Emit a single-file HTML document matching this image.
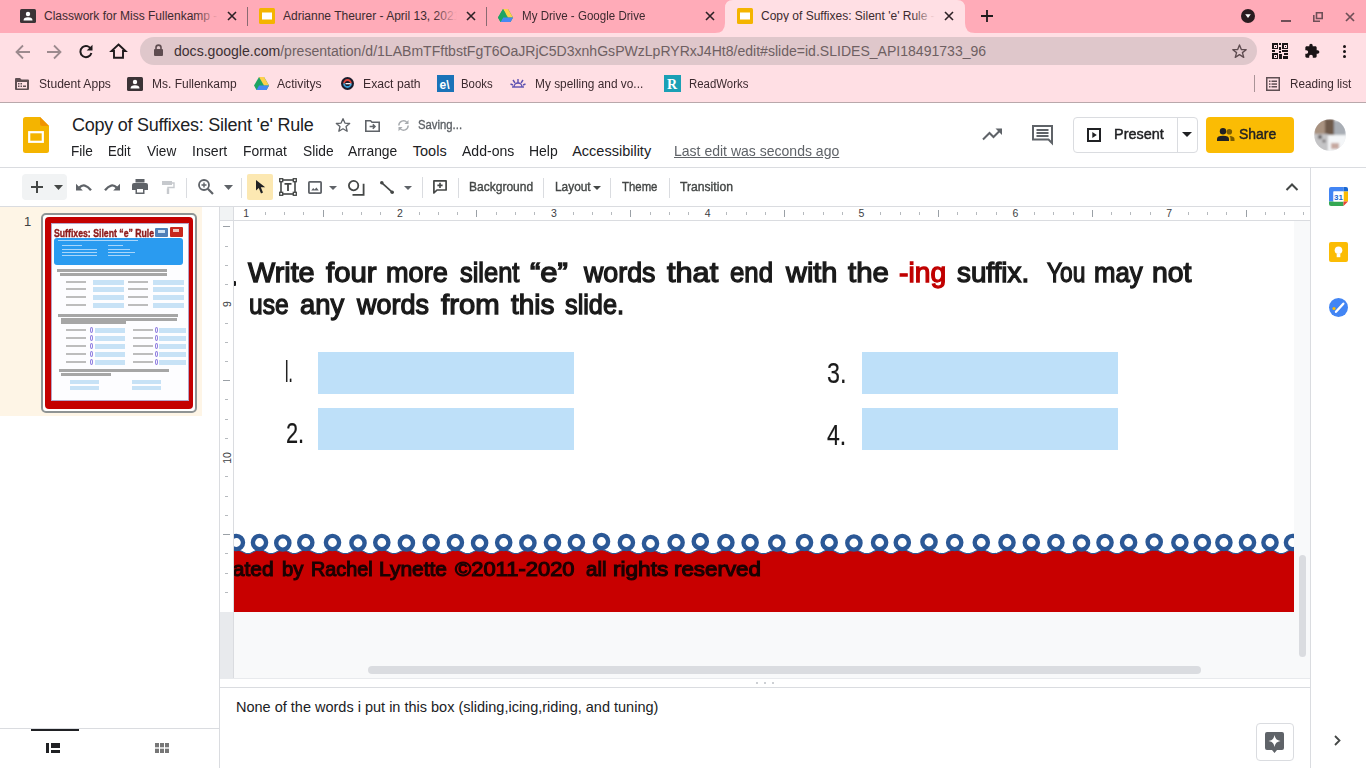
<!DOCTYPE html>
<html><head><meta charset="utf-8">
<style>
*{margin:0;padding:0;box-sizing:border-box}
html,body{width:1366px;height:768px;overflow:hidden;background:#fff;font-family:"Liberation Sans",sans-serif;position:relative}
.a{position:absolute}
.t{position:absolute;white-space:nowrap;line-height:1}
svg{position:absolute;overflow:visible}
</style></head><body>
<!-- ===== TAB STRIP ===== -->
<div class="a" style="left:0;top:0;width:1366px;height:33px;background:#ffabb8"></div>
<!-- active tab with feet -->
<svg style="left:715px;top:0" width="264" height="34" viewBox="0 0 264 34">
<path d="M0 33 Q10 33 10 23 L10 8 Q10 0 18 0 L242 0 Q250 0 250 8 L250 23 Q250 33 260 33 Z" fill="#ffdfe4"/>
</svg>
<!-- tab 1 -->
<svg style="left:20px;top:9px" width="16" height="14" viewBox="0 0 16 14"><rect x="0" y="0" width="16" height="14" rx="1.5" fill="#3b3336"/><circle cx="8" cy="5" r="2.2" fill="#fff"/><path d="M3.5 11.5 Q3.5 8.3 8 8.3 Q12.5 8.3 12.5 11.5 Z" fill="#fff"/></svg>
<div class="t" style="left:44px;top:10px;font-size:12px;color:#3c2a2f;width:177px;overflow:hidden">Classwork for Miss Fullenkamp - Google Classroom</div>
<div class="a" style="left:195px;top:5px;width:27px;height:22px;background:linear-gradient(90deg,rgba(255,171,184,0),#ffabb8 85%)"></div>
<svg style="left:227px;top:11px" width="10" height="10" viewBox="0 0 10 10"><path d="M1 1L9 9M9 1L1 9" stroke="#2d2226" stroke-width="1.6"/></svg>
<div class="a" style="left:247px;top:7px;width:1px;height:19px;background:#8a6a72"></div>
<!-- tab 2 -->
<svg style="left:259px;top:8px" width="16" height="16" viewBox="0 0 16 16"><rect x="0" y="0" width="16" height="16" rx="1.5" fill="#f4b400"/><rect x="3" y="4.5" width="10" height="7" fill="#fff"/></svg>
<div class="t" style="left:283px;top:10px;font-size:12px;color:#3c2a2f;width:177px;overflow:hidden">Adrianne Theurer - April 13, 2021</div>
<div class="a" style="left:434px;top:5px;width:27px;height:22px;background:linear-gradient(90deg,rgba(255,171,184,0),#ffabb8 85%)"></div>
<svg style="left:466px;top:11px" width="10" height="10" viewBox="0 0 10 10"><path d="M1 1L9 9M9 1L1 9" stroke="#2d2226" stroke-width="1.6"/></svg>
<div class="a" style="left:486px;top:7px;width:1px;height:19px;background:#8a6a72"></div>
<!-- tab 3 -->
<svg style="left:498px;top:9px" width="15" height="13" viewBox="0 0 15 13"><path d="M5 0 L10 0 L15 8.5 L12.5 13 L2.5 13 L0 8.5 Z" fill="#1fa463"/><path d="M5 0 L10 0 L15 8.5 L10 8.5 Z" fill="#ffd04b"/><path d="M15 8.5 L12.5 13 L2.5 13 L5 8.5 Z" fill="#4688f4"/><path d="M5 0 L7.5 4.3 L2.5 13 L0 8.5 Z" fill="#1fa463"/></svg>
<div class="t" style="left:522.3px;top:10.2px;font-size:12.5px;font-weight:normal;color:#3c2a2f;transform:scaleX(0.925);transform-origin:0 0;">My Drive - Google Drive</div>
<svg style="left:705px;top:11px" width="10" height="10" viewBox="0 0 10 10"><path d="M1 1L9 9M9 1L1 9" stroke="#2d2226" stroke-width="1.6"/></svg>
<!-- tab 4 active -->
<svg style="left:737px;top:8px" width="16" height="16" viewBox="0 0 16 16"><rect x="0" y="0" width="16" height="16" rx="1.5" fill="#f4b400"/><rect x="3" y="4.5" width="10" height="7" fill="#fff"/></svg>
<div class="t" style="left:761px;top:10px;font-size:12px;color:#3c2a2f;width:177px;overflow:hidden">Copy of Suffixes: Silent 'e' Rule - Google Slides</div>
<div class="a" style="left:912px;top:5px;width:27px;height:22px;background:linear-gradient(90deg,rgba(255,223,228,0),#ffdfe4 85%)"></div>
<svg style="left:944px;top:11px" width="10" height="10" viewBox="0 0 10 10"><path d="M1 1L9 9M9 1L1 9" stroke="#2d2226" stroke-width="1.6"/></svg>
<!-- new tab + -->
<svg style="left:981px;top:10px" width="12" height="12" viewBox="0 0 12 12"><path d="M6 0V12M0 6H12" stroke="#1f1a1c" stroke-width="1.8"/></svg>
<!-- right controls -->
<svg style="left:1241px;top:9px" width="14" height="14" viewBox="0 0 14 14"><circle cx="7" cy="7" r="7" fill="#2a1c20"/><path d="M4.2 5.2 H9.8 L7 9 Z" fill="#fff"/></svg>
<div class="a" style="left:1281px;top:20px;width:10px;height:2px;background:#6e4f57"></div>
<svg style="left:1313px;top:12px" width="10" height="10" viewBox="0 0 10 10"><path d="M3.5 0.8 H9.2 V6.5 H3.5 Z" fill="none" stroke="#6e4f57" stroke-width="1.6"/><path d="M0.8 3 V9.2 H7" fill="none" stroke="#6e4f57" stroke-width="1.6"/></svg>
<svg style="left:1345px;top:12px" width="10" height="10" viewBox="0 0 10 10"><path d="M1 1L9 9M9 1L1 9" stroke="#6e4f57" stroke-width="1.7"/></svg>

<!-- ===== TOOLBAR ===== -->
<div class="a" style="left:0;top:33px;width:1366px;height:69px;background:#ffdfe4"></div>
<div class="a" style="left:0;top:102px;width:1366px;height:1px;background:#b9a8ab"></div>
<!-- nav -->
<svg style="left:15px;top:44px" width="16" height="16" viewBox="0 0 16 16"><path d="M15 8H2M8 1.5L1.5 8L8 14.5" fill="none" stroke="#9c8a8e" stroke-width="1.8"/></svg>
<svg style="left:46px;top:44px" width="16" height="16" viewBox="0 0 16 16"><path d="M1 8H14M8 1.5L14.5 8L8 14.5" fill="none" stroke="#9c8a8e" stroke-width="1.8"/></svg>
<svg style="left:78px;top:43px" width="16" height="16" viewBox="0 0 16 16"><path d="M13.2 6.5 A5.6 5.6 0 1 0 13.4 10" fill="none" stroke="#1f1a1c" stroke-width="2"/><path d="M14.5 1.8 V7.6 H8.7 Z" fill="#1f1a1c"/></svg>
<svg style="left:110px;top:43px" width="17" height="16" viewBox="0 0 17 16"><path d="M8.5 1.5 L15.5 8 H13 V14.8 H4 V8 H1.5 Z" fill="none" stroke="#1f1a1c" stroke-width="1.9" stroke-linejoin="miter"/></svg>
<!-- omnibox -->
<div class="a" style="left:140px;top:37px;width:1117px;height:28px;background:#dfc7cb;border-radius:14px"></div>
<svg style="left:154px;top:44px" width="9" height="12" viewBox="0 0 9 12"><path d="M2 5.5V3.6A2.5 2.5 0 0 1 7 3.6V5.5" fill="none" stroke="#5e4c50" stroke-width="1.6"/><rect x="0" y="5" width="9" height="7" rx="1" fill="#5e4c50"/></svg>
<div class="t" style="left:174px;top:44px;font-size:14.05px;color:#3c3033">docs.google.com<span style="color:#6e5f62">/presentation/d/1LABmTFftbstFgT6OaJRjC5D3xnhGsPWzLpRYRxJ4Ht8/edit#slide=id.SLIDES_API18491733_96</span></div>
<svg style="left:1232px;top:44px" width="15" height="14" viewBox="0 0 24 23"><path d="M12 1.5 L15 9 L23 9.3 L16.8 14.2 L19 22 L12 17.5 L5 22 L7.2 14.2 L1 9.3 L9 9 Z" fill="none" stroke="#5e4c50" stroke-width="2.2" stroke-linejoin="round"/></svg>
<!-- QR -->
<svg style="left:1272px;top:43px" width="16" height="16" viewBox="0 0 16 16" shape-rendering="crispEdges">
<rect x="0" y="0" width="6" height="6" fill="#1a1416"/><rect x="1.5" y="1.5" width="3" height="3" fill="#ffdfe4"/><rect x="2.5" y="2.5" width="1" height="1" fill="#1a1416"/>
<rect x="10" y="0" width="6" height="6" fill="#1a1416"/><rect x="11.5" y="1.5" width="3" height="3" fill="#ffdfe4"/><rect x="12.5" y="2.5" width="1" height="1" fill="#1a1416"/>
<rect x="0" y="10" width="6" height="6" fill="#1a1416"/><rect x="1.5" y="11.5" width="3" height="3" fill="#ffdfe4"/><rect x="2.5" y="12.5" width="1" height="1" fill="#1a1416"/>
<rect x="7" y="0" width="2" height="2" fill="#1a1416"/><rect x="7" y="4" width="2" height="3" fill="#1a1416"/><rect x="0" y="7" width="3" height="2" fill="#1a1416"/><rect x="7" y="8" width="2" height="2" fill="#1a1416"/><rect x="10" y="7" width="6" height="2" fill="#1a1416"/><rect x="7" y="11" width="3" height="5" fill="#1a1416"/><rect x="12" y="10" width="4" height="2" fill="#1a1416"/><rect x="11" y="13" width="5" height="3" fill="#1a1416"/>
</svg>
<!-- puzzle -->
<svg style="left:1304px;top:43px" width="16" height="16" viewBox="0 0 24 24"><path d="M20.5 11H19V7c0-1.1-.9-2-2-2h-4V3.5C13 2.12 11.88 1 10.5 1S8 2.12 8 3.5V5H4c-1.1 0-1.99.9-1.99 2v3.8H3.5c1.49 0 2.7 1.21 2.7 2.7s-1.21 2.7-2.7 2.7H2V20c0 1.1.9 2 2 2h3.8v-1.5c0-1.49 1.21-2.7 2.7-2.7 1.49 0 2.7 1.21 2.7 2.7V22H17c1.1 0 2-.9 2-2v-4h1.5c1.38 0 2.5-1.12 2.5-2.5S21.88 11 20.5 11z" fill="#1a1416"/></svg>
<!-- kebab -->
<div class="a" style="left:1342.5px;top:45px;width:3.4px;height:3.4px;border-radius:50%;background:#1a1416"></div>
<div class="a" style="left:1342.5px;top:50px;width:3.4px;height:3.4px;border-radius:50%;background:#1a1416"></div>
<div class="a" style="left:1342.5px;top:55px;width:3.4px;height:3.4px;border-radius:50%;background:#1a1416"></div>

<!-- ===== BOOKMARKS ===== -->
<svg style="left:15px;top:78px" width="14" height="12" viewBox="0 0 14 12"><path d="M0 1 Q0 0 1 0 H5 L6.5 1.5 H13 Q14 1.5 14 2.5 V11 Q14 12 13 12 H1 Q0 12 0 11 Z" fill="#5f4f53"/><rect x="2" y="4" width="10" height="6.5" fill="#ffdfe4"/><g fill="#5f4f53"><rect x="3" y="5" width="1.5" height="1.5"/><rect x="5.5" y="5" width="1.5" height="1.5"/><rect x="3" y="7.5" width="1.5" height="1.5"/><rect x="5.5" y="7.5" width="1.5" height="1.5"/><rect x="8" y="7.5" width="3" height="1.5"/></g></svg>
<div class="t" style="left:38.5px;top:78.0px;font-size:12.5px;font-weight:normal;color:#3c2a2f;transform:scaleX(0.967);transform-origin:0 0;">Student Apps</div>
<svg style="left:127px;top:77px" width="16" height="14" viewBox="0 0 16 14"><rect x="0" y="0" width="16" height="14" rx="1.5" fill="#3b3336"/><circle cx="8" cy="5" r="2.2" fill="#fff"/><path d="M3.5 11.5 Q3.5 8.3 8 8.3 Q12.5 8.3 12.5 11.5 Z" fill="#fff"/></svg>
<div class="t" style="left:151.6px;top:78.0px;font-size:12.5px;font-weight:normal;color:#3c2a2f;transform:scaleX(0.959);transform-origin:0 0;">Ms. Fullenkamp</div>
<svg style="left:254px;top:77px" width="15" height="13" viewBox="0 0 15 13"><path d="M5 0 L10 0 L15 8.5 L12.5 13 L2.5 13 L0 8.5 Z" fill="#1fa463"/><path d="M5 0 L10 0 L15 8.5 L10 8.5 Z" fill="#ffd04b"/><path d="M15 8.5 L12.5 13 L2.5 13 L5 8.5 Z" fill="#4688f4"/></svg>
<div class="t" style="left:277.0px;top:78.0px;font-size:12.5px;font-weight:normal;color:#3c2a2f;transform:scaleX(0.974);transform-origin:0 0;">Activitys</div>
<svg style="left:341px;top:77px" width="13" height="13" viewBox="0 0 13 13"><circle cx="6.5" cy="6.5" r="6.5" fill="#1b1b2b"/><path d="M3 6.5 A3.5 3.5 0 0 1 10 6.5" fill="none" stroke="#e2483d" stroke-width="1.8"/><path d="M10 6.5 A3.5 3.5 0 0 1 3 6.5" fill="none" stroke="#3aa0d8" stroke-width="1.8"/><rect x="4.5" y="6" width="5" height="1.3" fill="#f5f5f5"/></svg>
<div class="t" style="left:363.0px;top:78.0px;font-size:12.5px;font-weight:normal;color:#3c2a2f;transform:scaleX(0.976);transform-origin:0 0;">Exact path</div>
<svg style="left:437px;top:75px" width="17" height="17" viewBox="0 0 17 17"><rect width="17" height="17" fill="#1a73b8"/><text x="2.5" y="13.5" font-size="12" font-weight="bold" fill="#fff" font-family="Liberation Sans">e\</text></svg>
<div class="t" style="left:461.0px;top:78.0px;font-size:12.5px;font-weight:normal;color:#3c2a2f;transform:scaleX(0.911);transform-origin:0 0;">Books</div>
<svg style="left:510px;top:77px" width="16" height="12" viewBox="0 0 16 12"><g stroke="#5b4fb0" stroke-width="1.4"><path d="M2 10 H14"/><path d="M8 2 V6"/><path d="M3 3 L5 6"/><path d="M13 3 L11 6"/><path d="M0.5 7 L3 8"/><path d="M15.5 7 L13 8"/></g><path d="M4 10 A4 4 0 0 1 12 10" fill="none" stroke="#5b4fb0" stroke-width="1.4"/></svg>
<div class="t" style="left:534.5px;top:78.0px;font-size:12.5px;font-weight:normal;color:#3c2a2f;transform:scaleX(0.950);transform-origin:0 0;">My spelling and vo...</div>
<svg style="left:664px;top:75px" width="17" height="17" viewBox="0 0 17 17"><rect width="17" height="17" fill="#1aa0b5"/><text x="3" y="14" font-size="14" font-weight="bold" fill="#fff" font-family="Liberation Serif">R</text></svg>
<div class="t" style="left:688.8px;top:78.0px;font-size:12.5px;font-weight:normal;color:#3c2a2f;transform:scaleX(0.912);transform-origin:0 0;">ReadWorks</div>
<div class="a" style="left:1254px;top:75px;width:1px;height:17px;background:#a99397"></div>
<svg style="left:1266px;top:77px" width="14" height="14" viewBox="0 0 14 14"><rect x="0.75" y="0.75" width="12.5" height="12.5" fill="none" stroke="#5f4f53" stroke-width="1.5"/><g fill="#5f4f53"><rect x="3" y="3.5" width="1.5" height="1.5"/><rect x="5.5" y="3.5" width="5.5" height="1.5"/><rect x="3" y="6.3" width="1.5" height="1.5"/><rect x="5.5" y="6.3" width="5.5" height="1.5"/><rect x="3" y="9" width="1.5" height="1.5"/><rect x="5.5" y="9" width="5.5" height="1.5"/></g></svg>
<div class="t" style="left:1289.5px;top:78.0px;font-size:12.5px;font-weight:normal;color:#3c2a2f;transform:scaleX(0.938);transform-origin:0 0;">Reading list</div>

<!-- ===== DOCS HEADER ===== -->
<svg style="left:23px;top:117px" width="26" height="36" viewBox="0 0 26 36"><path d="M2.5 0 H17 L26 9 V33.5 Q26 36 23.5 36 H2.5 Q0 36 0 33.5 V2.5 Q0 0 2.5 0 Z" fill="#f4b400"/><path d="M17 0 L26 9 H19 Q17 9 17 7 Z" fill="#f09300"/><rect x="6.2" y="15.2" width="13.6" height="9.6" fill="none" stroke="#fff" stroke-width="2.2"/></svg>
<div class="t" style="left:72px;top:116px;font-size:18px;color:#202124;letter-spacing:-0.25px">Copy of Suffixes: Silent 'e' Rule</div>
<svg style="left:335px;top:117px" width="16" height="16" viewBox="0 0 24 24"><path d="M12 2.5 L14.9 9.1 L22 9.7 L16.6 14.4 L18.2 21.4 L12 17.7 L5.8 21.4 L7.4 14.4 L2 9.7 L9.1 9.1 Z" fill="none" stroke="#5f6368" stroke-width="2" stroke-linejoin="round"/></svg>
<svg style="left:365px;top:119.5px" width="15" height="12" viewBox="0 0 15 12"><path d="M0.8 0.8 H5.6 L7 2.2 H14.2 V11.2 H0.8 Z" fill="none" stroke="#5f6368" stroke-width="1.6"/><path d="M4.6 6.6 H9.8 M7.8 4.4 L10 6.6 L7.8 8.8" fill="none" stroke="#5f6368" stroke-width="1.5"/></svg>
<svg style="left:396px;top:118px" width="15" height="15" viewBox="0 0 24 24"><path d="M4.5 12 A7.5 7.5 0 0 1 17.5 7" fill="none" stroke="#a8acb0" stroke-width="2.3"/><path d="M19.5 12 A7.5 7.5 0 0 1 6.5 17" fill="none" stroke="#a8acb0" stroke-width="2.3"/><path d="M20 3 V9.5 H13.5 Z" fill="#a8acb0"/><path d="M4 21 V14.5 H10.5 Z" fill="#a8acb0"/></svg>
<div class="t" style="left:418.0px;top:117.9px;font-size:13px;font-weight:normal;color:#5f6368;transform:scaleX(0.871);transform-origin:0 0;-webkit-text-stroke:0.35px currentColor;">Saving...</div>
<!-- menu -->
<div class="t" style="left:71.4px;top:144.2px;font-size:14.5px;font-weight:normal;color:#202124;transform:scaleX(0.939);transform-origin:0 0;">File</div>
<div class="t" style="left:108.0px;top:144.2px;font-size:14.5px;font-weight:normal;color:#202124;transform:scaleX(0.904);transform-origin:0 0;">Edit</div>
<div class="t" style="left:146.5px;top:144.2px;font-size:14.5px;font-weight:normal;color:#202124;transform:scaleX(0.938);transform-origin:0 0;">View</div>
<div class="t" style="left:191.5px;top:144.2px;font-size:14.5px;font-weight:normal;color:#202124;transform:scaleX(0.973);transform-origin:0 0;">Insert</div>
<div class="t" style="left:242.5px;top:144.2px;font-size:14.5px;font-weight:normal;color:#202124;transform:scaleX(0.957);transform-origin:0 0;">Format</div>
<div class="t" style="left:302.6px;top:144.2px;font-size:14.5px;font-weight:normal;color:#202124;transform:scaleX(0.950);transform-origin:0 0;">Slide</div>
<div class="t" style="left:348.0px;top:144.2px;font-size:14.5px;font-weight:normal;color:#202124;transform:scaleX(0.954);transform-origin:0 0;">Arrange</div>
<div class="t" style="left:412.8px;top:144.2px;font-size:14.5px;font-weight:normal;color:#202124;transform:scaleX(1.000);transform-origin:0 0;">Tools</div>
<div class="t" style="left:461.5px;top:144.2px;font-size:14.5px;font-weight:normal;color:#202124;transform:scaleX(0.969);transform-origin:0 0;">Add-ons</div>
<div class="t" style="left:528.6px;top:144.2px;font-size:14.5px;font-weight:normal;color:#202124;transform:scaleX(0.963);transform-origin:0 0;">Help</div>
<div class="t" style="left:572.2px;top:144.2px;font-size:14.5px;font-weight:normal;color:#202124;transform:scaleX(1.000);transform-origin:0 0;">Accessibility</div>
<div class="t" style="left:674.3px;top:144.2px;font-size:14.5px;font-weight:normal;color:#5f6368;transform:scaleX(0.967);transform-origin:0 0;text-decoration:underline;">Last edit was seconds ago</div>
<!-- right -->
<svg style="left:982px;top:128px" width="21" height="13" viewBox="0 0 21 13"><path d="M1 11.5 L7.5 5 L11.5 9 L19 1.5" fill="none" stroke="#5f6368" stroke-width="2"/><path d="M13.5 0.5 H20 V7 Z" fill="#5f6368"/></svg>
<svg style="left:1032px;top:125px" width="21" height="19" viewBox="0 0 21 19"><path d="M1 1 H20 V18 L16.5 14.5 H1 Z" fill="none" stroke="#5f6368" stroke-width="2" stroke-linejoin="miter"/><path d="M4.5 5 H16.5 M4.5 8 H16.5 M4.5 11 H16.5" stroke="#5f6368" stroke-width="1.8"/></svg>
<div class="a" style="left:1073px;top:117px;width:125px;height:36px;border:1px solid #dadce0;border-radius:4px;background:#fff"></div>
<div class="a" style="left:1177px;top:118px;width:1px;height:34px;background:#dadce0"></div>
<svg style="left:1087px;top:128px" width="14" height="14" viewBox="0 0 14 14"><rect x="1" y="1" width="12" height="12" fill="none" stroke="#202124" stroke-width="2"/><path d="M5.3 4 L9.8 7 L5.3 10 Z" fill="#202124"/></svg>
<div class="t" style="left:1113.6px;top:125.8px;font-size:15.5px;font-weight:normal;color:#202124;transform:scaleX(0.933);transform-origin:0 0;-webkit-text-stroke:0.45px currentColor;">Present</div>
<svg style="left:1182px;top:132px" width="10" height="5" viewBox="0 0 10 5"><path d="M0 0 H10 L5 5 Z" fill="#202124"/></svg>
<div class="a" style="left:1206px;top:117px;width:88px;height:36px;border-radius:4px;background:#fbbc04"></div>
<svg style="left:1217px;top:128px" width="18" height="13" viewBox="0 0 18 13"><circle cx="6" cy="3.3" r="3.2" fill="#202124"/><path d="M0 13 V11 Q0 7.7 6 7.7 Q12 7.7 12 11 V13 Z" fill="#202124"/><circle cx="12.3" cy="3.8" r="2.8" fill="#7a5b00"/><path d="M12.5 8 Q17.5 8.3 17.5 11 V13 H13.5 V11 Q13.5 9.2 12.5 8 Z" fill="#7a5b00"/></svg>
<div class="t" style="left:1238.7px;top:125.8px;font-size:15.5px;font-weight:normal;color:#202124;transform:scaleX(0.900);transform-origin:0 0;-webkit-text-stroke:0.45px currentColor;">Share</div>
<!-- avatar -->
<svg style="left:1314px;top:119px" width="32" height="32" viewBox="0 0 32 32">
<defs><clipPath id="avc"><circle cx="16" cy="16" r="15.8"/></clipPath><filter id="avb" x="-20%" y="-20%" width="140%" height="140%"><feGaussianBlur stdDeviation="1.1"/></filter></defs>
<g clip-path="url(#avc)">
<rect width="32" height="32" fill="#e9ebee"/>
<g filter="url(#avb)">
<rect x="0" y="0" width="12" height="15" fill="#a89280"/>
<rect x="11" y="0" width="9" height="16" fill="#6e5a4c"/>
<rect x="20" y="2" width="12" height="14" fill="#a9aeb5"/>
<rect x="0" y="15" width="14" height="17" fill="#c4c4c6"/>
<circle cx="6" cy="18" r="2" fill="#5a5456"/>
<circle cx="10" cy="22" r="1.6" fill="#6a6466"/>
<rect x="14" y="16" width="18" height="16" fill="#f4f6f8"/>
<rect x="17" y="24" width="8" height="6" fill="#c7a9a0"/>
</g></g></svg>
<div class="a" style="left:0;top:167px;width:1366px;height:1px;background:#dadce0"></div>

<!-- ===== SLIDES TOOLBAR ===== -->
<div class="a" style="left:0;top:206px;width:1310px;height:1px;background:#dadce0"></div>
<div class="a" style="left:22px;top:174px;width:45px;height:26px;background:#f1f3f4;border-radius:4px"></div>
<svg style="left:31px;top:181px" width="12" height="12" viewBox="0 0 12 12"><path d="M6 0V12M0 6H12" stroke="#444746" stroke-width="2"/></svg>
<svg style="left:54px;top:185px" width="9" height="5" viewBox="0 0 9 5"><path d="M0 0H9L4.5 5Z" fill="#444746"/></svg>
<!-- undo -->
<svg style="left:76px;top:183px" width="16" height="8" viewBox="0 0 16 8"><path d="M3.2 4.6 Q8.5 -0.8 15 7.2" fill="none" stroke="#5f6368" stroke-width="2.3"/><path d="M0 0.8 V7.6 H6.8 Z" fill="#5f6368"/></svg>
<!-- redo -->
<svg style="left:104px;top:183px" width="16" height="8" viewBox="0 0 16 8"><path d="M12.8 4.6 Q7.5 -0.8 1 7.2" fill="none" stroke="#5f6368" stroke-width="2.3"/><path d="M16 0.8 V7.6 H9.2 Z" fill="#5f6368"/></svg>
<!-- print -->
<svg style="left:132px;top:179px" width="16" height="15" viewBox="0 0 16 15"><rect x="3.5" y="0" width="9" height="3.5" fill="#5f6368"/><path d="M0 6 Q0 4 2 4 H14 Q16 4 16 6 V11 H12.5 V15 H3.5 V11 H0 Z" fill="#5f6368"/><rect x="5" y="10" width="6" height="3.5" fill="#fff"/></svg>
<!-- paint format -->
<svg style="left:162px;top:181px" width="13" height="13" viewBox="0 0 13 13"><rect x="0" y="0" width="10" height="4" fill="#c6c9cd"/><path d="M10 2 H12 V6.5 H6 V8" fill="none" stroke="#c6c9cd" stroke-width="1.4"/><rect x="4.8" y="7.5" width="2.4" height="5.5" fill="#c6c9cd"/></svg>
<div class="a" style="left:186px;top:178px;width:1px;height:20px;background:#dadce0"></div>
<!-- zoom -->
<svg style="left:198px;top:179px" width="16" height="16" viewBox="0 0 16 16"><circle cx="6" cy="6" r="5" fill="none" stroke="#5f6368" stroke-width="1.8"/><path d="M9.8 9.8 L15 15" stroke="#5f6368" stroke-width="2.2"/><path d="M6 3.5V8.5M3.5 6H8.5" stroke="#5f6368" stroke-width="1.4"/></svg>
<svg style="left:224px;top:185px" width="9" height="5" viewBox="0 0 9 5"><path d="M0 0H9L4.5 5Z" fill="#5f6368"/></svg>
<div class="a" style="left:241px;top:178px;width:1px;height:20px;background:#dadce0"></div>
<!-- select -->
<div class="a" style="left:247px;top:174px;width:26px;height:26px;background:#fce8b2;border-radius:2px"></div>
<svg style="left:256px;top:180px" width="10" height="14" viewBox="0 0 10 14"><path d="M0 0 L0 10.5 L2.8 8 L5 13.5 L7 12.6 L4.8 7.3 L9.2 7.3 Z" fill="#202124"/></svg>
<!-- textbox -->
<svg style="left:279px;top:178px" width="18" height="18" viewBox="0 0 18 18"><rect x="2" y="2" width="14" height="14" fill="none" stroke="#444746" stroke-width="1.6"/><g fill="#fff" stroke="#444746" stroke-width="1.3"><rect x="0.7" y="0.7" width="3" height="3"/><rect x="14.3" y="0.7" width="3" height="3"/><rect x="0.7" y="14.3" width="3" height="3"/><rect x="14.3" y="14.3" width="3" height="3"/></g><path d="M5.5 5.8 H12.5 M9 5.8 V13" stroke="#444746" stroke-width="1.8"/></svg>
<!-- image -->
<svg style="left:308px;top:180.5px" width="14" height="13" viewBox="0 0 14 13"><rect x="0.9" y="0.9" width="12.2" height="11.2" rx="0.8" fill="none" stroke="#5f6368" stroke-width="1.8"/><path d="M3.2 9.6 L5.2 7 L6.6 8.6 L8.4 6.4 L10.8 9.6 Z" fill="#5f6368"/></svg>
<svg style="left:329px;top:186px" width="8" height="4" viewBox="0 0 8 4"><path d="M0 0H8L4 4Z" fill="#5f6368"/></svg>
<!-- shape -->
<svg style="left:347.5px;top:179.5px" width="17" height="16" viewBox="0 0 17 16"><circle cx="5.6" cy="5.6" r="4.7" fill="none" stroke="#444746" stroke-width="1.8"/><path d="M4.5 14.9 H15.6 V3.8" fill="none" stroke="#444746" stroke-width="1.8"/></svg>
<!-- line -->
<svg style="left:379.5px;top:180.5px" width="14" height="13" viewBox="0 0 14 13"><path d="M1.6 1.6 L12.4 11.4" stroke="#444746" stroke-width="1.7"/><circle cx="1.8" cy="1.8" r="1.8" fill="#444746"/><circle cx="12.2" cy="11.2" r="1.8" fill="#444746"/></svg>
<svg style="left:404px;top:186px" width="8" height="4" viewBox="0 0 8 4"><path d="M0 0H8L4 4Z" fill="#5f6368"/></svg>
<div class="a" style="left:422px;top:177px;width:1px;height:21px;background:#dadce0"></div>
<!-- add comment -->
<svg style="left:433px;top:180px" width="14" height="14" viewBox="0 0 14 14"><path d="M0.9 0.9 H13.1 V10 H4 L0.9 13 Z" fill="none" stroke="#444746" stroke-width="1.7" stroke-linejoin="round"/><path d="M7 2.8 V8 M4.4 5.4 H9.6" stroke="#444746" stroke-width="1.6"/></svg>
<div class="a" style="left:458px;top:178px;width:1px;height:20px;background:#dadce0"></div>
<div class="t" style="left:469.0px;top:180.4px;font-size:13.5px;font-weight:normal;color:#444746;transform:scaleX(0.890);transform-origin:0 0;-webkit-text-stroke:0.4px currentColor;">Background</div>
<div class="a" style="left:543px;top:178px;width:1px;height:20px;background:#dadce0"></div>
<div class="t" style="left:555.3px;top:180.4px;font-size:13.5px;font-weight:normal;color:#444746;transform:scaleX(0.880);transform-origin:0 0;-webkit-text-stroke:0.4px currentColor;">Layout</div>
<svg style="left:593px;top:186px" width="8" height="4" viewBox="0 0 8 4"><path d="M0 0H8L4 4Z" fill="#444746"/></svg>
<div class="a" style="left:610px;top:178px;width:1px;height:20px;background:#dadce0"></div>
<div class="t" style="left:621.7px;top:180.4px;font-size:13.5px;font-weight:normal;color:#444746;transform:scaleX(0.844);transform-origin:0 0;-webkit-text-stroke:0.4px currentColor;">Theme</div>
<div class="a" style="left:669px;top:178px;width:1px;height:20px;background:#dadce0"></div>
<div class="t" style="left:680.0px;top:180.4px;font-size:13.5px;font-weight:normal;color:#444746;transform:scaleX(0.900);transform-origin:0 0;-webkit-text-stroke:0.4px currentColor;">Transition</div>
<svg style="left:1285px;top:182px" width="14" height="9" viewBox="0 0 14 9"><path d="M1.5 8 L7 2.5 L12.5 8" fill="none" stroke="#444746" stroke-width="2"/></svg>

<!-- ===== FILMSTRIP ===== -->
<div class="a" style="left:0;top:207px;width:202px;height:209px;background:#fef5e6"></div>
<div class="a" style="left:219px;top:207px;width:1px;height:561px;background:#dadce0"></div>
<div class="t" style="left:24px;top:215px;font-size:13px;color:#3c4043">1</div>
<div class="a" style="left:41px;top:213px;width:156px;height:200px;border:2px solid #8f9494;border-radius:5px;background:#fff"></div>
<div class="a" style="left:45px;top:217px;width:148px;height:192px;background:#c40000;border-radius:4px"></div>
<div class="a" style="left:51px;top:223px;width:138px;height:178px;background:#fdfdff;box-shadow:0 0 0 1px #b6a4c8 inset"></div>
<div class="t" style="left:53.6px;top:228.1px;font-size:10.5px;font-weight:bold;color:#8e1b1b;transform:scaleX(0.829);transform-origin:0 0;-webkit-text-stroke:0.4px currentColor;">Suffixes: Silent “e” Rule</div>
<div class="a" style="left:155px;top:228px;width:13px;height:9px;background:#4f7fb8;border-radius:1px"></div>
<div class="a" style="left:158px;top:230px;width:7px;height:3px;background:#cfe3f5"></div>
<div class="a" style="left:170px;top:227px;width:13px;height:10px;background:#c8261e;border-radius:1px"></div>
<div class="a" style="left:173px;top:229px;width:6px;height:3px;background:#f3c6c0"></div>
<div class="a" style="left:54px;top:238px;width:129px;height:27px;background:#2a9bf0;border-radius:3px"></div>
<div class="a" style="left:58px;top:240px;width:80px;height:1.4px;background:#a9d6fb"></div>
<div class="a" style="left:62px;top:245px;width:20px;height:1.4px;background:#a9d6fb"></div>
<div class="a" style="left:108px;top:245px;width:15px;height:1.4px;background:#a9d6fb"></div>
<div class="a" style="left:62px;top:249px;width:35px;height:1.4px;background:#a9d6fb"></div>
<div class="a" style="left:108px;top:249px;width:22px;height:1.4px;background:#a9d6fb"></div>
<div class="a" style="left:62px;top:252px;width:35px;height:1.4px;background:#a9d6fb"></div>
<div class="a" style="left:108px;top:252px;width:27px;height:1.4px;background:#a9d6fb"></div>
<div class="a" style="left:62px;top:255px;width:35px;height:1.4px;background:#a9d6fb"></div>
<div class="a" style="left:108px;top:255px;width:22px;height:1.4px;background:#a9d6fb"></div>
<div class="a" style="left:57px;top:269.4px;width:110px;height:2.4px;background:#a6a6a6"></div>
<div class="a" style="left:60px;top:273.4px;width:107px;height:2.4px;background:#a6a6a6"></div>
<div class="a" style="left:66px;top:281.4px;width:20px;height:2px;background:#bdbdbd"></div>
<div class="a" style="left:93px;top:280px;width:31px;height:5px;background:#c7e2f6"></div>
<div class="a" style="left:128px;top:281.4px;width:20px;height:2px;background:#bdbdbd"></div>
<div class="a" style="left:153px;top:280px;width:31px;height:5px;background:#c7e2f6"></div>
<div class="a" style="left:66px;top:288.4px;width:20px;height:2px;background:#bdbdbd"></div>
<div class="a" style="left:93px;top:287px;width:31px;height:5px;background:#c7e2f6"></div>
<div class="a" style="left:128px;top:288.4px;width:20px;height:2px;background:#bdbdbd"></div>
<div class="a" style="left:153px;top:287px;width:31px;height:5px;background:#c7e2f6"></div>
<div class="a" style="left:66px;top:296.4px;width:20px;height:2px;background:#bdbdbd"></div>
<div class="a" style="left:93px;top:295px;width:31px;height:5px;background:#c7e2f6"></div>
<div class="a" style="left:128px;top:296.4px;width:20px;height:2px;background:#bdbdbd"></div>
<div class="a" style="left:153px;top:295px;width:31px;height:5px;background:#c7e2f6"></div>
<div class="a" style="left:66px;top:304.4px;width:20px;height:2px;background:#bdbdbd"></div>
<div class="a" style="left:93px;top:303px;width:31px;height:5px;background:#c7e2f6"></div>
<div class="a" style="left:128px;top:304.4px;width:20px;height:2px;background:#bdbdbd"></div>
<div class="a" style="left:153px;top:303px;width:31px;height:5px;background:#c7e2f6"></div>
<div class="a" style="left:58px;top:314.4px;width:120px;height:2.4px;background:#a6a6a6"></div>
<div class="a" style="left:61px;top:318.4px;width:116px;height:2.4px;background:#a6a6a6"></div>
<div class="a" style="left:61px;top:321.4px;width:65px;height:2.4px;background:#a6a6a6"></div>
<div class="a" style="left:66px;top:329.4px;width:20px;height:2px;background:#bdbdbd"></div>
<div class="a" style="left:90px;top:327px;width:3px;height:6px;border:1px solid #8f7ee0;border-radius:50%"></div>
<div class="a" style="left:95px;top:328px;width:30px;height:5px;background:#c7e2f6"></div>
<div class="a" style="left:133px;top:329.4px;width:20px;height:2px;background:#bdbdbd"></div>
<div class="a" style="left:155px;top:327px;width:3px;height:6px;border:1px solid #8f7ee0;border-radius:50%"></div>
<div class="a" style="left:159px;top:328px;width:27px;height:5px;background:#c7e2f6"></div>
<div class="a" style="left:66px;top:337.4px;width:20px;height:2px;background:#bdbdbd"></div>
<div class="a" style="left:90px;top:335px;width:3px;height:6px;border:1px solid #8f7ee0;border-radius:50%"></div>
<div class="a" style="left:95px;top:336px;width:30px;height:5px;background:#c7e2f6"></div>
<div class="a" style="left:133px;top:337.4px;width:20px;height:2px;background:#bdbdbd"></div>
<div class="a" style="left:155px;top:335px;width:3px;height:6px;border:1px solid #8f7ee0;border-radius:50%"></div>
<div class="a" style="left:159px;top:336px;width:27px;height:5px;background:#c7e2f6"></div>
<div class="a" style="left:66px;top:345.4px;width:20px;height:2px;background:#bdbdbd"></div>
<div class="a" style="left:90px;top:343px;width:3px;height:6px;border:1px solid #8f7ee0;border-radius:50%"></div>
<div class="a" style="left:95px;top:344px;width:30px;height:5px;background:#c7e2f6"></div>
<div class="a" style="left:133px;top:345.4px;width:20px;height:2px;background:#bdbdbd"></div>
<div class="a" style="left:155px;top:343px;width:3px;height:6px;border:1px solid #8f7ee0;border-radius:50%"></div>
<div class="a" style="left:159px;top:344px;width:27px;height:5px;background:#c7e2f6"></div>
<div class="a" style="left:66px;top:353.4px;width:20px;height:2px;background:#bdbdbd"></div>
<div class="a" style="left:90px;top:351px;width:3px;height:6px;border:1px solid #8f7ee0;border-radius:50%"></div>
<div class="a" style="left:95px;top:352px;width:30px;height:5px;background:#c7e2f6"></div>
<div class="a" style="left:133px;top:353.4px;width:20px;height:2px;background:#bdbdbd"></div>
<div class="a" style="left:155px;top:351px;width:3px;height:6px;border:1px solid #8f7ee0;border-radius:50%"></div>
<div class="a" style="left:159px;top:352px;width:27px;height:5px;background:#c7e2f6"></div>
<div class="a" style="left:66px;top:361.4px;width:20px;height:2px;background:#bdbdbd"></div>
<div class="a" style="left:90px;top:359px;width:3px;height:6px;border:1px solid #8f7ee0;border-radius:50%"></div>
<div class="a" style="left:95px;top:360px;width:30px;height:5px;background:#c7e2f6"></div>
<div class="a" style="left:133px;top:361.4px;width:20px;height:2px;background:#bdbdbd"></div>
<div class="a" style="left:155px;top:359px;width:3px;height:6px;border:1px solid #8f7ee0;border-radius:50%"></div>
<div class="a" style="left:159px;top:360px;width:27px;height:5px;background:#c7e2f6"></div>
<div class="a" style="left:59px;top:369.4px;width:110px;height:2.4px;background:#a6a6a6"></div>
<div class="a" style="left:61px;top:373.4px;width:50px;height:2.4px;background:#a6a6a6"></div>
<div class="a" style="left:70px;top:380px;width:29px;height:4px;background:#c7e2f6"></div>
<div class="a" style="left:132px;top:380px;width:29px;height:4px;background:#c7e2f6"></div>
<div class="a" style="left:70px;top:386px;width:29px;height:4px;background:#c7e2f6"></div>
<div class="a" style="left:132px;top:386px;width:29px;height:4px;background:#c7e2f6"></div>
<div class="a" style="left:0;top:728px;width:219px;height:1px;background:#dadce0"></div>
<div class="a" style="left:31px;top:729px;width:48px;height:2px;background:#202124"></div>
<svg style="left:46px;top:743px" width="14" height="10" viewBox="0 0 14 10"><rect x="0" y="0" width="3" height="10" fill="#202124"/><rect x="5" y="0" width="9" height="5" fill="#202124"/><rect x="5" y="7" width="9" height="3" fill="#202124"/></svg>
<svg style="left:155px;top:743px" width="14" height="10" viewBox="0 0 14 10" fill="#777"><rect x="0" y="0" width="4" height="4.3"/><rect x="5" y="0" width="4" height="4.3"/><rect x="10" y="0" width="4" height="4.3"/><rect x="0" y="5.7" width="4" height="4.3"/><rect x="5" y="5.7" width="4" height="4.3"/><rect x="10" y="5.7" width="4" height="4.3"/></svg>
<!-- ===== CANVAS ===== -->
<div class="a" style="left:220px;top:207px;width:1090px;height:472px;background:#f8f9fa"></div>
<div class="a" style="left:220px;top:207px;width:1090px;height:13px;background:#fff"></div>
<div class="a" style="left:220px;top:207px;width:13px;height:13px;background:#f1f3f4"></div>
<div class="a" style="left:220px;top:220px;width:1090px;height:1px;background:#dadce0"></div>
<div class="a" style="left:220px;top:221px;width:13px;height:391px;background:#fff"></div>
<div class="a" style="left:220px;top:612px;width:13px;height:67px;background:#e8eaed"></div>
<div class="a" style="left:233px;top:207px;width:1px;height:472px;background:#dadce0"></div>
<div class="t" style="left:243.2px;top:207.5px;font-size:10.5px;color:#3c4043;width:6px;text-align:center">1</div>
<div class="a" style="left:264.9px;top:212px;width:1px;height:3px;background:#b6babe"></div>
<div class="a" style="left:284.2px;top:212px;width:1px;height:3px;background:#b6babe"></div>
<div class="a" style="left:303.4px;top:212px;width:1px;height:3px;background:#b6babe"></div>
<div class="a" style="left:322.6px;top:210px;width:1px;height:7px;background:#9aa0a6"></div>
<div class="a" style="left:341.8px;top:212px;width:1px;height:3px;background:#b6babe"></div>
<div class="a" style="left:361.1px;top:212px;width:1px;height:3px;background:#b6babe"></div>
<div class="a" style="left:380.3px;top:212px;width:1px;height:3px;background:#b6babe"></div>
<div class="t" style="left:397.0px;top:207.5px;font-size:10.5px;color:#3c4043;width:6px;text-align:center">2</div>
<div class="a" style="left:418.8px;top:212px;width:1px;height:3px;background:#b6babe"></div>
<div class="a" style="left:438.0px;top:212px;width:1px;height:3px;background:#b6babe"></div>
<div class="a" style="left:457.2px;top:212px;width:1px;height:3px;background:#b6babe"></div>
<div class="a" style="left:476.4px;top:210px;width:1px;height:7px;background:#9aa0a6"></div>
<div class="a" style="left:495.7px;top:212px;width:1px;height:3px;background:#b6babe"></div>
<div class="a" style="left:514.9px;top:212px;width:1px;height:3px;background:#b6babe"></div>
<div class="a" style="left:534.1px;top:212px;width:1px;height:3px;background:#b6babe"></div>
<div class="t" style="left:550.9px;top:207.5px;font-size:10.5px;color:#3c4043;width:6px;text-align:center">3</div>
<div class="a" style="left:572.6px;top:212px;width:1px;height:3px;background:#b6babe"></div>
<div class="a" style="left:591.8px;top:212px;width:1px;height:3px;background:#b6babe"></div>
<div class="a" style="left:611.0px;top:212px;width:1px;height:3px;background:#b6babe"></div>
<div class="a" style="left:630.3px;top:210px;width:1px;height:7px;background:#9aa0a6"></div>
<div class="a" style="left:649.5px;top:212px;width:1px;height:3px;background:#b6babe"></div>
<div class="a" style="left:668.7px;top:212px;width:1px;height:3px;background:#b6babe"></div>
<div class="a" style="left:688.0px;top:212px;width:1px;height:3px;background:#b6babe"></div>
<div class="t" style="left:704.7px;top:207.5px;font-size:10.5px;color:#3c4043;width:6px;text-align:center">4</div>
<div class="a" style="left:726.4px;top:212px;width:1px;height:3px;background:#b6babe"></div>
<div class="a" style="left:745.6px;top:212px;width:1px;height:3px;background:#b6babe"></div>
<div class="a" style="left:764.9px;top:212px;width:1px;height:3px;background:#b6babe"></div>
<div class="a" style="left:784.1px;top:210px;width:1px;height:7px;background:#9aa0a6"></div>
<div class="a" style="left:803.3px;top:212px;width:1px;height:3px;background:#b6babe"></div>
<div class="a" style="left:822.6px;top:212px;width:1px;height:3px;background:#b6babe"></div>
<div class="a" style="left:841.8px;top:212px;width:1px;height:3px;background:#b6babe"></div>
<div class="t" style="left:858.5px;top:207.5px;font-size:10.5px;color:#3c4043;width:6px;text-align:center">5</div>
<div class="a" style="left:880.2px;top:212px;width:1px;height:3px;background:#b6babe"></div>
<div class="a" style="left:899.5px;top:212px;width:1px;height:3px;background:#b6babe"></div>
<div class="a" style="left:918.7px;top:212px;width:1px;height:3px;background:#b6babe"></div>
<div class="a" style="left:937.9px;top:210px;width:1px;height:7px;background:#9aa0a6"></div>
<div class="a" style="left:957.2px;top:212px;width:1px;height:3px;background:#b6babe"></div>
<div class="a" style="left:976.4px;top:212px;width:1px;height:3px;background:#b6babe"></div>
<div class="a" style="left:995.6px;top:212px;width:1px;height:3px;background:#b6babe"></div>
<div class="t" style="left:1012.4px;top:207.5px;font-size:10.5px;color:#3c4043;width:6px;text-align:center">6</div>
<div class="a" style="left:1034.1px;top:212px;width:1px;height:3px;background:#b6babe"></div>
<div class="a" style="left:1053.3px;top:212px;width:1px;height:3px;background:#b6babe"></div>
<div class="a" style="left:1072.5px;top:212px;width:1px;height:3px;background:#b6babe"></div>
<div class="a" style="left:1091.8px;top:210px;width:1px;height:7px;background:#9aa0a6"></div>
<div class="a" style="left:1111.0px;top:212px;width:1px;height:3px;background:#b6babe"></div>
<div class="a" style="left:1130.2px;top:212px;width:1px;height:3px;background:#b6babe"></div>
<div class="a" style="left:1149.5px;top:212px;width:1px;height:3px;background:#b6babe"></div>
<div class="t" style="left:1166.2px;top:207.5px;font-size:10.5px;color:#3c4043;width:6px;text-align:center">7</div>
<div class="a" style="left:1187.9px;top:212px;width:1px;height:3px;background:#b6babe"></div>
<div class="a" style="left:1207.1px;top:212px;width:1px;height:3px;background:#b6babe"></div>
<div class="a" style="left:1226.4px;top:212px;width:1px;height:3px;background:#b6babe"></div>
<div class="a" style="left:1245.6px;top:210px;width:1px;height:7px;background:#9aa0a6"></div>
<div class="a" style="left:1264.8px;top:212px;width:1px;height:3px;background:#b6babe"></div>
<div class="a" style="left:1284.1px;top:212px;width:1px;height:3px;background:#b6babe"></div>
<div class="a" style="left:1303.3px;top:212px;width:1px;height:3px;background:#b6babe"></div>
<div class="a" style="left:223px;top:226.3px;width:7px;height:1px;background:#9aa0a6"></div>
<div class="a" style="left:225px;top:245.6px;width:3px;height:1px;background:#b6babe"></div>
<div class="a" style="left:225px;top:264.8px;width:3px;height:1px;background:#b6babe"></div>
<div class="a" style="left:225px;top:284.0px;width:3px;height:1px;background:#b6babe"></div>
<div class="t" style="left:216.5px;top:298.8px;width:20px;height:10px;font-size:10.5px;color:#3c4043;text-align:center;transform:rotate(-90deg);line-height:10px">9</div>
<div class="a" style="left:225px;top:322.5px;width:3px;height:1px;background:#b6babe"></div>
<div class="a" style="left:225px;top:341.7px;width:3px;height:1px;background:#b6babe"></div>
<div class="a" style="left:225px;top:360.9px;width:3px;height:1px;background:#b6babe"></div>
<div class="a" style="left:223px;top:380.2px;width:7px;height:1px;background:#9aa0a6"></div>
<div class="a" style="left:225px;top:399.4px;width:3px;height:1px;background:#b6babe"></div>
<div class="a" style="left:225px;top:418.6px;width:3px;height:1px;background:#b6babe"></div>
<div class="a" style="left:225px;top:437.9px;width:3px;height:1px;background:#b6babe"></div>
<div class="t" style="left:216.5px;top:452.6px;width:20px;height:10px;font-size:10.5px;color:#3c4043;text-align:center;transform:rotate(-90deg);line-height:10px">10</div>
<div class="a" style="left:225px;top:476.3px;width:3px;height:1px;background:#b6babe"></div>
<div class="a" style="left:225px;top:495.5px;width:3px;height:1px;background:#b6babe"></div>
<div class="a" style="left:225px;top:514.8px;width:3px;height:1px;background:#b6babe"></div>
<div class="a" style="left:223px;top:534.0px;width:7px;height:1px;background:#9aa0a6"></div>
<div class="a" style="left:225px;top:553.2px;width:3px;height:1px;background:#b6babe"></div>
<div class="a" style="left:225px;top:572.5px;width:3px;height:1px;background:#b6babe"></div>
<div class="a" style="left:225px;top:591.7px;width:3px;height:1px;background:#b6babe"></div>
<div class="a" style="left:234px;top:221px;width:1060px;height:391px;background:#fff;overflow:hidden">
<div class="t" style="left:14.2px;top:38.1px;font-size:28px;font-weight:normal;color:#1a1a1a;transform:scaleX(1.028);transform-origin:0 0;-webkit-text-stroke:1.3px currentColor;">Write</div>
<div class="t" style="left:91.5px;top:38.1px;font-size:28px;font-weight:normal;color:#1a1a1a;transform:scaleX(1.048);transform-origin:0 0;-webkit-text-stroke:1.3px currentColor;">four</div>
<div class="t" style="left:152.4px;top:38.1px;font-size:28px;font-weight:normal;color:#1a1a1a;transform:scaleX(0.969);transform-origin:0 0;-webkit-text-stroke:1.3px currentColor;">more</div>
<div class="t" style="left:226.0px;top:38.1px;font-size:28px;font-weight:normal;color:#1a1a1a;transform:scaleX(0.908);transform-origin:0 0;-webkit-text-stroke:1.3px currentColor;">silent</div>
<div class="t" style="left:296.4px;top:38.1px;font-size:28px;font-weight:normal;color:#1a1a1a;transform:scaleX(1.109);transform-origin:0 0;-webkit-text-stroke:1.3px currentColor;">“e”</div>
<div class="t" style="left:350.3px;top:38.1px;font-size:28px;font-weight:normal;color:#1a1a1a;transform:scaleX(0.957);transform-origin:0 0;-webkit-text-stroke:1.3px currentColor;">words</div>
<div class="t" style="left:432.5px;top:38.1px;font-size:28px;font-weight:normal;color:#1a1a1a;transform:scaleX(1.096);transform-origin:0 0;-webkit-text-stroke:1.3px currentColor;">that</div>
<div class="t" style="left:495.7px;top:38.1px;font-size:28px;font-weight:normal;color:#1a1a1a;transform:scaleX(0.921);transform-origin:0 0;-webkit-text-stroke:1.3px currentColor;">end</div>
<div class="t" style="left:551.7px;top:38.1px;font-size:28px;font-weight:normal;color:#1a1a1a;transform:scaleX(1.033);transform-origin:0 0;-webkit-text-stroke:1.3px currentColor;">with</div>
<div class="t" style="left:613.9px;top:38.1px;font-size:28px;font-weight:normal;color:#1a1a1a;transform:scaleX(1.049);transform-origin:0 0;-webkit-text-stroke:1.3px currentColor;">the</div>
<div class="t" style="left:665.3px;top:38.1px;font-size:28px;font-weight:normal;color:#c00000;transform:scaleX(1.009);transform-origin:0 0;-webkit-text-stroke:1.3px currentColor;">-ing</div>
<div class="t" style="left:723.3px;top:38.1px;font-size:28px;font-weight:normal;color:#1a1a1a;transform:scaleX(0.993);transform-origin:0 0;-webkit-text-stroke:1.3px currentColor;">suffix.</div>
<div class="t" style="left:812.9px;top:38.1px;font-size:28px;font-weight:normal;color:#1a1a1a;transform:scaleX(0.813);transform-origin:0 0;-webkit-text-stroke:1.3px currentColor;">You</div>
<div class="t" style="left:860.3px;top:38.1px;font-size:28px;font-weight:normal;color:#1a1a1a;transform:scaleX(0.921);transform-origin:0 0;-webkit-text-stroke:1.3px currentColor;">may</div>
<div class="t" style="left:918.3px;top:38.1px;font-size:28px;font-weight:normal;color:#1a1a1a;transform:scaleX(1.015);transform-origin:0 0;-webkit-text-stroke:1.3px currentColor;">not</div>
<div class="t" style="left:14.8px;top:69.7px;font-size:28px;font-weight:normal;color:#1a1a1a;transform:scaleX(0.878);transform-origin:0 0;-webkit-text-stroke:1.3px currentColor;">use</div>
<div class="t" style="left:66.0px;top:69.7px;font-size:28px;font-weight:normal;color:#1a1a1a;transform:scaleX(0.978);transform-origin:0 0;-webkit-text-stroke:1.3px currentColor;">any</div>
<div class="t" style="left:122.7px;top:69.7px;font-size:28px;font-weight:normal;color:#1a1a1a;transform:scaleX(0.963);transform-origin:0 0;-webkit-text-stroke:1.3px currentColor;">words</div>
<div class="t" style="left:206.6px;top:69.7px;font-size:28px;font-weight:normal;color:#1a1a1a;transform:scaleX(1.046);transform-origin:0 0;-webkit-text-stroke:1.3px currentColor;">from</div>
<div class="t" style="left:276.9px;top:69.7px;font-size:28px;font-weight:normal;color:#1a1a1a;transform:scaleX(0.998);transform-origin:0 0;-webkit-text-stroke:1.3px currentColor;">this</div>
<div class="t" style="left:331.0px;top:69.7px;font-size:28px;font-weight:normal;color:#1a1a1a;transform:scaleX(0.902);transform-origin:0 0;-webkit-text-stroke:1.3px currentColor;">slide.</div>
<div class="a" style="left:83.5px;top:131px;width:256.5px;height:41.5px;background:#bee0f9"></div>
<div class="a" style="left:83.5px;top:187px;width:256.5px;height:41.5px;background:#bee0f9"></div>
<div class="a" style="left:627.5px;top:131px;width:256.5px;height:41.5px;background:#bee0f9"></div>
<div class="a" style="left:627.5px;top:187px;width:256.5px;height:41.5px;background:#bee0f9"></div>
<div class="a" style="left:0;top:60px;width:2px;height:5px;background:#1a1a1a;border-radius:0 1px 1px 0"></div>
<div class="t" style="left:50.8px;top:136.7px;font-size:29px;font-weight:normal;color:#1a1a1a;transform:scaleX(0.527);transform-origin:0 0;-webkit-text-stroke:0.2px currentColor;">l.</div>
<div class="t" style="left:51.6px;top:197.6px;font-size:29px;font-weight:normal;color:#1a1a1a;transform:scaleX(0.750);transform-origin:0 0;-webkit-text-stroke:0.2px currentColor;">2.</div>
<div class="t" style="left:593.0px;top:137.8px;font-size:29px;font-weight:normal;color:#1a1a1a;transform:scaleX(0.804);transform-origin:0 0;-webkit-text-stroke:0.2px currentColor;">3.</div>
<div class="t" style="left:593.0px;top:199.7px;font-size:29px;font-weight:normal;color:#1a1a1a;transform:scaleX(0.792);transform-origin:0 0;-webkit-text-stroke:0.2px currentColor;">4.</div>
<svg style="left:0;top:300px" width="1060" height="91" viewBox="0 0 1060 91">
<path d="M0.0 29.15 L1.0 28.92 L2.0 28.81 L3.0 28.83 L4.0 28.98 L5.0 29.26 L6.0 29.64 L7.0 30.10 L8.0 30.61 L9.0 31.12 L10.0 31.60 L11.0 32.02 L12.0 32.34 L13.0 32.54 L14.0 32.60 L15.0 32.52 L16.0 32.31 L17.0 31.98 L18.0 31.56 L19.0 31.07 L20.0 30.56 L21.0 30.05 L22.0 29.60 L23.0 29.22 L24.0 28.96 L25.0 28.82 L26.0 28.82 L27.0 28.95 L28.0 29.22 L29.0 29.59 L30.0 30.04 L31.0 30.53 L32.0 31.04 L33.0 31.53 L34.0 31.95 L35.0 32.29 L36.0 32.51 L37.0 32.60 L38.0 32.55 L39.0 32.37 L40.0 32.07 L41.0 31.66 L42.0 31.19 L43.0 30.69 L44.0 30.18 L45.0 29.71 L46.0 29.32 L47.0 29.02 L48.0 28.84 L49.0 28.80 L50.0 28.90 L51.0 29.13 L52.0 29.48 L53.0 29.92 L54.0 30.42 L55.0 30.93 L56.0 31.43 L57.0 31.88 L58.0 32.24 L59.0 32.48 L60.0 32.59 L61.0 32.57 L62.0 32.40 L63.0 32.11 L64.0 31.71 L65.0 31.24 L66.0 30.73 L67.0 30.21 L68.0 29.74 L69.0 29.33 L70.0 29.03 L71.0 28.85 L72.0 28.80 L73.0 28.88 L74.0 29.05 L75.0 29.31 L76.0 29.65 L77.0 30.05 L78.0 30.49 L79.0 30.93 L80.0 31.37 L81.0 31.76 L82.0 32.10 L83.0 32.36 L84.0 32.53 L85.0 32.60 L86.0 32.56 L87.0 32.42 L88.0 32.19 L89.0 31.87 L90.0 31.49 L91.0 31.07 L92.0 30.62 L93.0 30.18 L94.0 29.77 L95.0 29.41 L96.0 29.12 L97.0 28.92 L98.0 28.81 L99.0 28.81 L100.0 28.93 L101.0 29.15 L102.0 29.46 L103.0 29.85 L104.0 30.29 L105.0 30.76 L106.0 31.22 L107.0 31.65 L108.0 32.02 L109.0 32.32 L110.0 32.51 L111.0 32.60 L112.0 32.57 L113.0 32.43 L114.0 32.18 L115.0 31.85 L116.0 31.44 L117.0 30.99 L118.0 30.52 L119.0 30.07 L120.0 29.65 L121.0 29.30 L122.0 29.03 L123.0 28.86 L124.0 28.80 L125.0 28.87 L126.0 29.06 L127.0 29.37 L128.0 29.76 L129.0 30.23 L130.0 30.73 L131.0 31.22 L132.0 31.68 L133.0 32.07 L134.0 32.37 L135.0 32.55 L136.0 32.60 L137.0 32.52 L138.0 32.32 L139.0 32.00 L140.0 31.59 L141.0 31.12 L142.0 30.62 L143.0 30.13 L144.0 29.68 L145.0 29.30 L146.0 29.01 L147.0 28.84 L148.0 28.80 L149.0 28.89 L150.0 29.09 L151.0 29.40 L152.0 29.79 L153.0 30.24 L154.0 30.72 L155.0 31.20 L156.0 31.65 L157.0 32.03 L158.0 32.33 L159.0 32.53 L160.0 32.60 L161.0 32.55 L162.0 32.38 L163.0 32.10 L164.0 31.73 L165.0 31.30 L166.0 30.82 L167.0 30.34 L168.0 29.88 L169.0 29.47 L170.0 29.15 L171.0 28.92 L172.0 28.81 L173.0 28.82 L174.0 28.95 L175.0 29.20 L176.0 29.54 L177.0 29.95 L178.0 30.41 L179.0 30.89 L180.0 31.36 L181.0 31.79 L182.0 32.14 L183.0 32.41 L184.0 32.56 L185.0 32.60 L186.0 32.51 L187.0 32.31 L188.0 32.01 L189.0 31.62 L190.0 31.18 L191.0 30.70 L192.0 30.22 L193.0 29.78 L194.0 29.39 L195.0 29.09 L196.0 28.89 L197.0 28.80 L198.0 28.84 L199.0 29.00 L200.0 29.28 L201.0 29.65 L202.0 30.09 L203.0 30.58 L204.0 31.07 L205.0 31.53 L206.0 31.94 L207.0 32.27 L208.0 32.49 L209.0 32.59 L210.0 32.57 L211.0 32.42 L212.0 32.15 L213.0 31.79 L214.0 31.35 L215.0 30.87 L216.0 30.38 L217.0 29.91 L218.0 29.49 L219.0 29.16 L220.0 28.92 L221.0 28.81 L222.0 28.82 L223.0 28.96 L224.0 29.22 L225.0 29.57 L226.0 30.00 L227.0 30.48 L228.0 30.97 L229.0 31.44 L230.0 31.87 L231.0 32.21 L232.0 32.46 L233.0 32.58 L234.0 32.58 L235.0 32.46 L236.0 32.21 L237.0 31.87 L238.0 31.44 L239.0 30.97 L240.0 30.48 L241.0 30.00 L242.0 29.57 L243.0 29.22 L244.0 28.96 L245.0 28.82 L246.0 28.81 L247.0 28.93 L248.0 29.16 L249.0 29.50 L250.0 29.92 L251.0 30.39 L252.0 30.89 L253.0 31.37 L254.0 31.80 L255.0 32.16 L256.0 32.43 L257.0 32.57 L258.0 32.59 L259.0 32.48 L260.0 32.25 L261.0 31.92 L262.0 31.50 L263.0 31.03 L264.0 30.54 L265.0 30.06 L266.0 29.62 L267.0 29.25 L268.0 28.98 L269.0 28.83 L270.0 28.81 L271.0 28.91 L272.0 29.13 L273.0 29.46 L274.0 29.87 L275.0 30.33 L276.0 30.82 L277.0 31.31 L278.0 31.75 L279.0 32.12 L280.0 32.40 L281.0 32.56 L282.0 32.60 L283.0 32.51 L284.0 32.30 L285.0 31.98 L286.0 31.58 L287.0 31.12 L288.0 30.63 L289.0 30.14 L290.0 29.69 L291.0 29.31 L292.0 29.03 L293.0 28.85 L294.0 28.80 L295.0 28.87 L296.0 29.07 L297.0 29.37 L298.0 29.75 L299.0 30.20 L300.0 30.68 L301.0 31.16 L302.0 31.61 L303.0 32.00 L304.0 32.31 L305.0 32.51 L306.0 32.60 L307.0 32.56 L308.0 32.40 L309.0 32.13 L310.0 31.77 L311.0 31.34 L312.0 30.87 L313.0 30.39 L314.0 29.92 L315.0 29.51 L316.0 29.17 L317.0 28.94 L318.0 28.82 L319.0 28.82 L320.0 28.95 L321.0 29.20 L322.0 29.55 L323.0 29.98 L324.0 30.46 L325.0 30.96 L326.0 31.44 L327.0 31.87 L328.0 32.22 L329.0 32.46 L330.0 32.59 L331.0 32.58 L332.0 32.44 L333.0 32.19 L334.0 31.83 L335.0 31.40 L336.0 30.91 L337.0 30.41 L338.0 29.94 L339.0 29.51 L340.0 29.17 L341.0 28.93 L342.0 28.81 L343.0 28.82 L344.0 28.95 L345.0 29.19 L346.0 29.52 L347.0 29.93 L348.0 30.38 L349.0 30.85 L350.0 31.32 L351.0 31.74 L352.0 32.11 L353.0 32.38 L354.0 32.55 L355.0 32.60 L356.0 32.53 L357.0 32.36 L358.0 32.07 L359.0 31.70 L360.0 31.27 L361.0 30.81 L362.0 30.33 L363.0 29.88 L364.0 29.48 L365.0 29.16 L366.0 28.93 L367.0 28.81 L368.0 28.82 L369.0 28.93 L370.0 29.17 L371.0 29.49 L372.0 29.90 L373.0 30.35 L374.0 30.83 L375.0 31.30 L376.0 31.73 L377.0 32.10 L378.0 32.37 L379.0 32.55 L380.0 32.60 L381.0 32.53 L382.0 32.35 L383.0 32.06 L384.0 31.69 L385.0 31.26 L386.0 30.78 L387.0 30.31 L388.0 29.86 L389.0 29.46 L390.0 29.14 L391.0 28.92 L392.0 28.81 L393.0 28.82 L394.0 28.96 L395.0 29.22 L396.0 29.58 L397.0 30.01 L398.0 30.49 L399.0 30.98 L400.0 31.46 L401.0 31.88 L402.0 32.23 L403.0 32.47 L404.0 32.59 L405.0 32.58 L406.0 32.45 L407.0 32.20 L408.0 31.84 L409.0 31.41 L410.0 30.93 L411.0 30.44 L412.0 29.96 L413.0 29.54 L414.0 29.19 L415.0 28.94 L416.0 28.82 L417.0 28.81 L418.0 28.93 L419.0 29.15 L420.0 29.46 L421.0 29.85 L422.0 30.28 L423.0 30.75 L424.0 31.21 L425.0 31.64 L426.0 32.01 L427.0 32.31 L428.0 32.50 L429.0 32.59 L430.0 32.57 L431.0 32.44 L432.0 32.20 L433.0 31.87 L434.0 31.47 L435.0 31.02 L436.0 30.56 L437.0 30.10 L438.0 29.68 L439.0 29.32 L440.0 29.05 L441.0 28.87 L442.0 28.80 L443.0 28.85 L444.0 29.03 L445.0 29.31 L446.0 29.69 L447.0 30.14 L448.0 30.63 L449.0 31.12 L450.0 31.58 L451.0 31.98 L452.0 32.30 L453.0 32.51 L454.0 32.60 L455.0 32.56 L456.0 32.40 L457.0 32.12 L458.0 31.75 L459.0 31.31 L460.0 30.82 L461.0 30.33 L462.0 29.87 L463.0 29.46 L464.0 29.13 L465.0 28.91 L466.0 28.81 L467.0 28.83 L468.0 28.96 L469.0 29.20 L470.0 29.53 L471.0 29.93 L472.0 30.38 L473.0 30.84 L474.0 31.30 L475.0 31.72 L476.0 32.08 L477.0 32.35 L478.0 32.53 L479.0 32.60 L480.0 32.55 L481.0 32.40 L482.0 32.14 L483.0 31.79 L484.0 31.38 L485.0 30.93 L486.0 30.47 L487.0 30.02 L488.0 29.61 L489.0 29.26 L490.0 29.00 L491.0 28.85 L492.0 28.80 L493.0 28.88 L494.0 29.08 L495.0 29.38 L496.0 29.78 L497.0 30.24 L498.0 30.72 L499.0 31.21 L500.0 31.66 L501.0 32.05 L502.0 32.35 L503.0 32.54 L504.0 32.60 L505.0 32.54 L506.0 32.35 L507.0 32.05 L508.0 31.66 L509.0 31.21 L510.0 30.72 L511.0 30.24 L512.0 29.78 L513.0 29.38 L514.0 29.08 L515.0 28.88 L516.0 28.80 L517.0 28.84 L518.0 28.99 L519.0 29.23 L520.0 29.55 L521.0 29.93 L522.0 30.36 L523.0 30.80 L524.0 31.24 L525.0 31.65 L526.0 32.01 L527.0 32.29 L528.0 32.49 L529.0 32.59 L530.0 32.58 L531.0 32.48 L532.0 32.27 L533.0 31.97 L534.0 31.61 L535.0 31.20 L536.0 30.76 L537.0 30.31 L538.0 29.89 L539.0 29.51 L540.0 29.20 L541.0 28.97 L542.0 28.83 L543.0 28.80 L544.0 28.87 L545.0 29.03 L546.0 29.28 L547.0 29.60 L548.0 29.98 L549.0 30.39 L550.0 30.82 L551.0 31.24 L552.0 31.64 L553.0 31.99 L554.0 32.27 L555.0 32.47 L556.0 32.58 L557.0 32.59 L558.0 32.51 L559.0 32.34 L560.0 32.08 L561.0 31.75 L562.0 31.36 L563.0 30.95 L564.0 30.52 L565.0 30.10 L566.0 29.71 L567.0 29.37 L568.0 29.10 L569.0 28.91 L570.0 28.81 L571.0 28.82 L572.0 28.94 L573.0 29.17 L574.0 29.50 L575.0 29.91 L576.0 30.38 L577.0 30.86 L578.0 31.33 L579.0 31.76 L580.0 32.12 L581.0 32.39 L582.0 32.56 L583.0 32.60 L584.0 32.52 L585.0 32.32 L586.0 32.02 L587.0 31.64 L588.0 31.19 L589.0 30.71 L590.0 30.23 L591.0 29.79 L592.0 29.40 L593.0 29.09 L594.0 28.89 L595.0 28.80 L596.0 28.84 L597.0 29.00 L598.0 29.26 L599.0 29.62 L600.0 30.05 L601.0 30.52 L602.0 31.00 L603.0 31.46 L604.0 31.88 L605.0 32.21 L606.0 32.45 L607.0 32.58 L608.0 32.59 L609.0 32.47 L610.0 32.24 L611.0 31.91 L612.0 31.51 L613.0 31.05 L614.0 30.57 L615.0 30.09 L616.0 29.66 L617.0 29.29 L618.0 29.02 L619.0 28.85 L620.0 28.80 L621.0 28.87 L622.0 29.04 L623.0 29.32 L624.0 29.68 L625.0 30.10 L626.0 30.55 L627.0 31.01 L628.0 31.46 L629.0 31.86 L630.0 32.19 L631.0 32.43 L632.0 32.57 L633.0 32.60 L634.0 32.51 L635.0 32.32 L636.0 32.03 L637.0 31.66 L638.0 31.24 L639.0 30.78 L640.0 30.32 L641.0 29.88 L642.0 29.49 L643.0 29.17 L644.0 28.94 L645.0 28.82 L646.0 28.81 L647.0 28.94 L648.0 29.20 L649.0 29.58 L650.0 30.04 L651.0 30.56 L652.0 31.08 L653.0 31.57 L654.0 32.00 L655.0 32.33 L656.0 32.53 L657.0 32.60 L658.0 32.52 L659.0 32.30 L660.0 31.96 L661.0 31.53 L662.0 31.03 L663.0 30.50 L664.0 29.99 L665.0 29.54 L666.0 29.17 L667.0 28.92 L668.0 28.81 L669.0 28.83 L670.0 28.95 L671.0 29.17 L672.0 29.48 L673.0 29.85 L674.0 30.27 L675.0 30.71 L676.0 31.15 L677.0 31.57 L678.0 31.94 L679.0 32.24 L680.0 32.46 L681.0 32.58 L682.0 32.59 L683.0 32.50 L684.0 32.32 L685.0 32.04 L686.0 31.69 L687.0 31.28 L688.0 30.85 L689.0 30.40 L690.0 29.97 L691.0 29.58 L692.0 29.25 L693.0 29.01 L694.0 28.85 L695.0 28.80 L696.0 28.86 L697.0 29.02 L698.0 29.29 L699.0 29.64 L700.0 30.05 L701.0 30.50 L702.0 30.97 L703.0 31.41 L704.0 31.82 L705.0 32.16 L706.0 32.41 L707.0 32.56 L708.0 32.60 L709.0 32.53 L710.0 32.34 L711.0 32.06 L712.0 31.70 L713.0 31.28 L714.0 30.83 L715.0 30.36 L716.0 29.92 L717.0 29.53 L718.0 29.20 L719.0 28.96 L720.0 28.83 L721.0 28.80 L722.0 28.89 L723.0 29.07 L724.0 29.35 L725.0 29.70 L726.0 30.10 L727.0 30.54 L728.0 30.99 L729.0 31.42 L730.0 31.81 L731.0 32.14 L732.0 32.39 L733.0 32.55 L734.0 32.60 L735.0 32.55 L736.0 32.39 L737.0 32.14 L738.0 31.81 L739.0 31.42 L740.0 30.99 L741.0 30.54 L742.0 30.10 L743.0 29.70 L744.0 29.35 L745.0 29.07 L746.0 28.89 L747.0 28.80 L748.0 28.83 L749.0 28.96 L750.0 29.20 L751.0 29.53 L752.0 29.92 L753.0 30.36 L754.0 30.83 L755.0 31.28 L756.0 31.70 L757.0 32.06 L758.0 32.34 L759.0 32.53 L760.0 32.60 L761.0 32.56 L762.0 32.41 L763.0 32.16 L764.0 31.82 L765.0 31.41 L766.0 30.97 L767.0 30.50 L768.0 30.05 L769.0 29.64 L770.0 29.29 L771.0 29.02 L772.0 28.86 L773.0 28.80 L774.0 28.86 L775.0 29.05 L776.0 29.34 L777.0 29.73 L778.0 30.18 L779.0 30.66 L780.0 31.15 L781.0 31.61 L782.0 32.00 L783.0 32.31 L784.0 32.52 L785.0 32.60 L786.0 32.55 L787.0 32.39 L788.0 32.11 L789.0 31.73 L790.0 31.29 L791.0 30.81 L792.0 30.32 L793.0 29.86 L794.0 29.45 L795.0 29.13 L796.0 28.91 L797.0 28.81 L798.0 28.83 L799.0 28.98 L800.0 29.23 L801.0 29.59 L802.0 30.01 L803.0 30.48 L804.0 30.97 L805.0 31.43 L806.0 31.85 L807.0 32.20 L808.0 32.44 L809.0 32.58 L810.0 32.59 L811.0 32.48 L812.0 32.25 L813.0 31.93 L814.0 31.52 L815.0 31.06 L816.0 30.58 L817.0 30.10 L818.0 29.67 L819.0 29.30 L820.0 29.02 L821.0 28.85 L822.0 28.80 L823.0 28.87 L824.0 29.05 L825.0 29.32 L826.0 29.68 L827.0 30.10 L828.0 30.56 L829.0 31.02 L830.0 31.47 L831.0 31.87 L832.0 32.20 L833.0 32.44 L834.0 32.57 L835.0 32.59 L836.0 32.50 L837.0 32.31 L838.0 32.01 L839.0 31.64 L840.0 31.21 L841.0 30.75 L842.0 30.28 L843.0 29.85 L844.0 29.46 L845.0 29.15 L846.0 28.93 L847.0 28.81 L848.0 28.82 L849.0 28.95 L850.0 29.21 L851.0 29.57 L852.0 30.02 L853.0 30.51 L854.0 31.02 L855.0 31.50 L856.0 31.93 L857.0 32.27 L858.0 32.49 L859.0 32.60 L860.0 32.56 L861.0 32.40 L862.0 32.11 L863.0 31.72 L864.0 31.26 L865.0 30.76 L866.0 30.26 L867.0 29.79 L868.0 29.38 L869.0 29.07 L870.0 28.87 L871.0 28.80 L872.0 28.87 L873.0 29.06 L874.0 29.37 L875.0 29.78 L876.0 30.25 L877.0 30.75 L878.0 31.25 L879.0 31.71 L880.0 32.10 L881.0 32.39 L882.0 32.56 L883.0 32.60 L884.0 32.50 L885.0 32.28 L886.0 31.95 L887.0 31.53 L888.0 31.05 L889.0 30.55 L890.0 30.06 L891.0 29.61 L892.0 29.24 L893.0 28.97 L894.0 28.82 L895.0 28.81 L896.0 28.91 L897.0 29.12 L898.0 29.42 L899.0 29.80 L900.0 30.24 L901.0 30.70 L902.0 31.16 L903.0 31.60 L904.0 31.98 L905.0 32.28 L906.0 32.49 L907.0 32.59 L908.0 32.58 L909.0 32.46 L910.0 32.23 L911.0 31.91 L912.0 31.51 L913.0 31.07 L914.0 30.61 L915.0 30.15 L916.0 29.72 L917.0 29.36 L918.0 29.07 L919.0 28.88 L920.0 28.80 L921.0 28.84 L922.0 28.98 L923.0 29.23 L924.0 29.56 L925.0 29.96 L926.0 30.41 L927.0 30.87 L928.0 31.33 L929.0 31.74 L930.0 32.10 L931.0 32.37 L932.0 32.54 L933.0 32.60 L934.0 32.55 L935.0 32.39 L936.0 32.13 L937.0 31.78 L938.0 31.37 L939.0 30.92 L940.0 30.46 L941.0 30.01 L942.0 29.60 L943.0 29.26 L944.0 29.00 L945.0 28.85 L946.0 28.80 L947.0 28.89 L948.0 29.12 L949.0 29.47 L950.0 29.92 L951.0 30.42 L952.0 30.95 L953.0 31.46 L954.0 31.91 L955.0 32.27 L956.0 32.50 L957.0 32.60 L958.0 32.55 L959.0 32.35 L960.0 32.03 L961.0 31.60 L962.0 31.11 L963.0 30.58 L964.0 30.06 L965.0 29.59 L966.0 29.21 L967.0 28.94 L968.0 28.81 L969.0 28.83 L970.0 29.00 L971.0 29.32 L972.0 29.76 L973.0 30.27 L974.0 30.82 L975.0 31.37 L976.0 31.85 L977.0 32.24 L978.0 32.49 L979.0 32.60 L980.0 32.54 L981.0 32.33 L982.0 31.98 L983.0 31.52 L984.0 30.99 L985.0 30.44 L986.0 29.91 L987.0 29.44 L988.0 29.09 L989.0 28.87 L990.0 28.80 L991.0 28.88 L992.0 29.09 L993.0 29.41 L994.0 29.82 L995.0 30.30 L996.0 30.80 L997.0 31.30 L998.0 31.75 L999.0 32.13 L1000.0 32.41 L1001.0 32.57 L1002.0 32.59 L1003.0 32.49 L1004.0 32.25 L1005.0 31.91 L1006.0 31.49 L1007.0 31.00 L1008.0 30.50 L1009.0 30.01 L1010.0 29.57 L1011.0 29.21 L1012.0 28.95 L1013.0 28.82 L1014.0 28.82 L1015.0 28.96 L1016.0 29.24 L1017.0 29.64 L1018.0 30.11 L1019.0 30.63 L1020.0 31.16 L1021.0 31.65 L1022.0 32.07 L1023.0 32.38 L1024.0 32.56 L1025.0 32.60 L1026.0 32.49 L1027.0 32.24 L1028.0 31.87 L1029.0 31.41 L1030.0 30.90 L1031.0 30.37 L1032.0 29.87 L1033.0 29.43 L1034.0 29.09 L1035.0 28.87 L1036.0 28.80 L1037.0 28.87 L1038.0 29.09 L1039.0 29.43 L1040.0 29.87 L1041.0 30.37 L1042.0 30.90 L1043.0 31.41 L1044.0 31.87 L1045.0 32.24 L1046.0 32.49 L1047.0 32.60 L1048.0 32.56 L1049.0 32.38 L1050.0 32.07 L1051.0 31.65 L1052.0 31.16 L1053.0 30.63 L1054.0 30.11 L1055.0 29.64 L1056.0 29.24 L1057.0 28.96 L1058.0 28.82 L1059.0 28.82 L1060.0 28.94 L1061.0 29.18 L1062.0 29.52 L1062 91 L0 91 Z" fill="#c80000"/>
<path d="M0.0 29.15 L1.0 28.92 L2.0 28.81 L3.0 28.83 L4.0 28.98 L5.0 29.26 L6.0 29.64 L7.0 30.10 L8.0 30.61 L9.0 31.12 L10.0 31.60 L11.0 32.02 L12.0 32.34 L13.0 32.54 L14.0 32.60 L15.0 32.52 L16.0 32.31 L17.0 31.98 L18.0 31.56 L19.0 31.07 L20.0 30.56 L21.0 30.05 L22.0 29.60 L23.0 29.22 L24.0 28.96 L25.0 28.82 L26.0 28.82 L27.0 28.95 L28.0 29.22 L29.0 29.59 L30.0 30.04 L31.0 30.53 L32.0 31.04 L33.0 31.53 L34.0 31.95 L35.0 32.29 L36.0 32.51 L37.0 32.60 L38.0 32.55 L39.0 32.37 L40.0 32.07 L41.0 31.66 L42.0 31.19 L43.0 30.69 L44.0 30.18 L45.0 29.71 L46.0 29.32 L47.0 29.02 L48.0 28.84 L49.0 28.80 L50.0 28.90 L51.0 29.13 L52.0 29.48 L53.0 29.92 L54.0 30.42 L55.0 30.93 L56.0 31.43 L57.0 31.88 L58.0 32.24 L59.0 32.48 L60.0 32.59 L61.0 32.57 L62.0 32.40 L63.0 32.11 L64.0 31.71 L65.0 31.24 L66.0 30.73 L67.0 30.21 L68.0 29.74 L69.0 29.33 L70.0 29.03 L71.0 28.85 L72.0 28.80 L73.0 28.88 L74.0 29.05 L75.0 29.31 L76.0 29.65 L77.0 30.05 L78.0 30.49 L79.0 30.93 L80.0 31.37 L81.0 31.76 L82.0 32.10 L83.0 32.36 L84.0 32.53 L85.0 32.60 L86.0 32.56 L87.0 32.42 L88.0 32.19 L89.0 31.87 L90.0 31.49 L91.0 31.07 L92.0 30.62 L93.0 30.18 L94.0 29.77 L95.0 29.41 L96.0 29.12 L97.0 28.92 L98.0 28.81 L99.0 28.81 L100.0 28.93 L101.0 29.15 L102.0 29.46 L103.0 29.85 L104.0 30.29 L105.0 30.76 L106.0 31.22 L107.0 31.65 L108.0 32.02 L109.0 32.32 L110.0 32.51 L111.0 32.60 L112.0 32.57 L113.0 32.43 L114.0 32.18 L115.0 31.85 L116.0 31.44 L117.0 30.99 L118.0 30.52 L119.0 30.07 L120.0 29.65 L121.0 29.30 L122.0 29.03 L123.0 28.86 L124.0 28.80 L125.0 28.87 L126.0 29.06 L127.0 29.37 L128.0 29.76 L129.0 30.23 L130.0 30.73 L131.0 31.22 L132.0 31.68 L133.0 32.07 L134.0 32.37 L135.0 32.55 L136.0 32.60 L137.0 32.52 L138.0 32.32 L139.0 32.00 L140.0 31.59 L141.0 31.12 L142.0 30.62 L143.0 30.13 L144.0 29.68 L145.0 29.30 L146.0 29.01 L147.0 28.84 L148.0 28.80 L149.0 28.89 L150.0 29.09 L151.0 29.40 L152.0 29.79 L153.0 30.24 L154.0 30.72 L155.0 31.20 L156.0 31.65 L157.0 32.03 L158.0 32.33 L159.0 32.53 L160.0 32.60 L161.0 32.55 L162.0 32.38 L163.0 32.10 L164.0 31.73 L165.0 31.30 L166.0 30.82 L167.0 30.34 L168.0 29.88 L169.0 29.47 L170.0 29.15 L171.0 28.92 L172.0 28.81 L173.0 28.82 L174.0 28.95 L175.0 29.20 L176.0 29.54 L177.0 29.95 L178.0 30.41 L179.0 30.89 L180.0 31.36 L181.0 31.79 L182.0 32.14 L183.0 32.41 L184.0 32.56 L185.0 32.60 L186.0 32.51 L187.0 32.31 L188.0 32.01 L189.0 31.62 L190.0 31.18 L191.0 30.70 L192.0 30.22 L193.0 29.78 L194.0 29.39 L195.0 29.09 L196.0 28.89 L197.0 28.80 L198.0 28.84 L199.0 29.00 L200.0 29.28 L201.0 29.65 L202.0 30.09 L203.0 30.58 L204.0 31.07 L205.0 31.53 L206.0 31.94 L207.0 32.27 L208.0 32.49 L209.0 32.59 L210.0 32.57 L211.0 32.42 L212.0 32.15 L213.0 31.79 L214.0 31.35 L215.0 30.87 L216.0 30.38 L217.0 29.91 L218.0 29.49 L219.0 29.16 L220.0 28.92 L221.0 28.81 L222.0 28.82 L223.0 28.96 L224.0 29.22 L225.0 29.57 L226.0 30.00 L227.0 30.48 L228.0 30.97 L229.0 31.44 L230.0 31.87 L231.0 32.21 L232.0 32.46 L233.0 32.58 L234.0 32.58 L235.0 32.46 L236.0 32.21 L237.0 31.87 L238.0 31.44 L239.0 30.97 L240.0 30.48 L241.0 30.00 L242.0 29.57 L243.0 29.22 L244.0 28.96 L245.0 28.82 L246.0 28.81 L247.0 28.93 L248.0 29.16 L249.0 29.50 L250.0 29.92 L251.0 30.39 L252.0 30.89 L253.0 31.37 L254.0 31.80 L255.0 32.16 L256.0 32.43 L257.0 32.57 L258.0 32.59 L259.0 32.48 L260.0 32.25 L261.0 31.92 L262.0 31.50 L263.0 31.03 L264.0 30.54 L265.0 30.06 L266.0 29.62 L267.0 29.25 L268.0 28.98 L269.0 28.83 L270.0 28.81 L271.0 28.91 L272.0 29.13 L273.0 29.46 L274.0 29.87 L275.0 30.33 L276.0 30.82 L277.0 31.31 L278.0 31.75 L279.0 32.12 L280.0 32.40 L281.0 32.56 L282.0 32.60 L283.0 32.51 L284.0 32.30 L285.0 31.98 L286.0 31.58 L287.0 31.12 L288.0 30.63 L289.0 30.14 L290.0 29.69 L291.0 29.31 L292.0 29.03 L293.0 28.85 L294.0 28.80 L295.0 28.87 L296.0 29.07 L297.0 29.37 L298.0 29.75 L299.0 30.20 L300.0 30.68 L301.0 31.16 L302.0 31.61 L303.0 32.00 L304.0 32.31 L305.0 32.51 L306.0 32.60 L307.0 32.56 L308.0 32.40 L309.0 32.13 L310.0 31.77 L311.0 31.34 L312.0 30.87 L313.0 30.39 L314.0 29.92 L315.0 29.51 L316.0 29.17 L317.0 28.94 L318.0 28.82 L319.0 28.82 L320.0 28.95 L321.0 29.20 L322.0 29.55 L323.0 29.98 L324.0 30.46 L325.0 30.96 L326.0 31.44 L327.0 31.87 L328.0 32.22 L329.0 32.46 L330.0 32.59 L331.0 32.58 L332.0 32.44 L333.0 32.19 L334.0 31.83 L335.0 31.40 L336.0 30.91 L337.0 30.41 L338.0 29.94 L339.0 29.51 L340.0 29.17 L341.0 28.93 L342.0 28.81 L343.0 28.82 L344.0 28.95 L345.0 29.19 L346.0 29.52 L347.0 29.93 L348.0 30.38 L349.0 30.85 L350.0 31.32 L351.0 31.74 L352.0 32.11 L353.0 32.38 L354.0 32.55 L355.0 32.60 L356.0 32.53 L357.0 32.36 L358.0 32.07 L359.0 31.70 L360.0 31.27 L361.0 30.81 L362.0 30.33 L363.0 29.88 L364.0 29.48 L365.0 29.16 L366.0 28.93 L367.0 28.81 L368.0 28.82 L369.0 28.93 L370.0 29.17 L371.0 29.49 L372.0 29.90 L373.0 30.35 L374.0 30.83 L375.0 31.30 L376.0 31.73 L377.0 32.10 L378.0 32.37 L379.0 32.55 L380.0 32.60 L381.0 32.53 L382.0 32.35 L383.0 32.06 L384.0 31.69 L385.0 31.26 L386.0 30.78 L387.0 30.31 L388.0 29.86 L389.0 29.46 L390.0 29.14 L391.0 28.92 L392.0 28.81 L393.0 28.82 L394.0 28.96 L395.0 29.22 L396.0 29.58 L397.0 30.01 L398.0 30.49 L399.0 30.98 L400.0 31.46 L401.0 31.88 L402.0 32.23 L403.0 32.47 L404.0 32.59 L405.0 32.58 L406.0 32.45 L407.0 32.20 L408.0 31.84 L409.0 31.41 L410.0 30.93 L411.0 30.44 L412.0 29.96 L413.0 29.54 L414.0 29.19 L415.0 28.94 L416.0 28.82 L417.0 28.81 L418.0 28.93 L419.0 29.15 L420.0 29.46 L421.0 29.85 L422.0 30.28 L423.0 30.75 L424.0 31.21 L425.0 31.64 L426.0 32.01 L427.0 32.31 L428.0 32.50 L429.0 32.59 L430.0 32.57 L431.0 32.44 L432.0 32.20 L433.0 31.87 L434.0 31.47 L435.0 31.02 L436.0 30.56 L437.0 30.10 L438.0 29.68 L439.0 29.32 L440.0 29.05 L441.0 28.87 L442.0 28.80 L443.0 28.85 L444.0 29.03 L445.0 29.31 L446.0 29.69 L447.0 30.14 L448.0 30.63 L449.0 31.12 L450.0 31.58 L451.0 31.98 L452.0 32.30 L453.0 32.51 L454.0 32.60 L455.0 32.56 L456.0 32.40 L457.0 32.12 L458.0 31.75 L459.0 31.31 L460.0 30.82 L461.0 30.33 L462.0 29.87 L463.0 29.46 L464.0 29.13 L465.0 28.91 L466.0 28.81 L467.0 28.83 L468.0 28.96 L469.0 29.20 L470.0 29.53 L471.0 29.93 L472.0 30.38 L473.0 30.84 L474.0 31.30 L475.0 31.72 L476.0 32.08 L477.0 32.35 L478.0 32.53 L479.0 32.60 L480.0 32.55 L481.0 32.40 L482.0 32.14 L483.0 31.79 L484.0 31.38 L485.0 30.93 L486.0 30.47 L487.0 30.02 L488.0 29.61 L489.0 29.26 L490.0 29.00 L491.0 28.85 L492.0 28.80 L493.0 28.88 L494.0 29.08 L495.0 29.38 L496.0 29.78 L497.0 30.24 L498.0 30.72 L499.0 31.21 L500.0 31.66 L501.0 32.05 L502.0 32.35 L503.0 32.54 L504.0 32.60 L505.0 32.54 L506.0 32.35 L507.0 32.05 L508.0 31.66 L509.0 31.21 L510.0 30.72 L511.0 30.24 L512.0 29.78 L513.0 29.38 L514.0 29.08 L515.0 28.88 L516.0 28.80 L517.0 28.84 L518.0 28.99 L519.0 29.23 L520.0 29.55 L521.0 29.93 L522.0 30.36 L523.0 30.80 L524.0 31.24 L525.0 31.65 L526.0 32.01 L527.0 32.29 L528.0 32.49 L529.0 32.59 L530.0 32.58 L531.0 32.48 L532.0 32.27 L533.0 31.97 L534.0 31.61 L535.0 31.20 L536.0 30.76 L537.0 30.31 L538.0 29.89 L539.0 29.51 L540.0 29.20 L541.0 28.97 L542.0 28.83 L543.0 28.80 L544.0 28.87 L545.0 29.03 L546.0 29.28 L547.0 29.60 L548.0 29.98 L549.0 30.39 L550.0 30.82 L551.0 31.24 L552.0 31.64 L553.0 31.99 L554.0 32.27 L555.0 32.47 L556.0 32.58 L557.0 32.59 L558.0 32.51 L559.0 32.34 L560.0 32.08 L561.0 31.75 L562.0 31.36 L563.0 30.95 L564.0 30.52 L565.0 30.10 L566.0 29.71 L567.0 29.37 L568.0 29.10 L569.0 28.91 L570.0 28.81 L571.0 28.82 L572.0 28.94 L573.0 29.17 L574.0 29.50 L575.0 29.91 L576.0 30.38 L577.0 30.86 L578.0 31.33 L579.0 31.76 L580.0 32.12 L581.0 32.39 L582.0 32.56 L583.0 32.60 L584.0 32.52 L585.0 32.32 L586.0 32.02 L587.0 31.64 L588.0 31.19 L589.0 30.71 L590.0 30.23 L591.0 29.79 L592.0 29.40 L593.0 29.09 L594.0 28.89 L595.0 28.80 L596.0 28.84 L597.0 29.00 L598.0 29.26 L599.0 29.62 L600.0 30.05 L601.0 30.52 L602.0 31.00 L603.0 31.46 L604.0 31.88 L605.0 32.21 L606.0 32.45 L607.0 32.58 L608.0 32.59 L609.0 32.47 L610.0 32.24 L611.0 31.91 L612.0 31.51 L613.0 31.05 L614.0 30.57 L615.0 30.09 L616.0 29.66 L617.0 29.29 L618.0 29.02 L619.0 28.85 L620.0 28.80 L621.0 28.87 L622.0 29.04 L623.0 29.32 L624.0 29.68 L625.0 30.10 L626.0 30.55 L627.0 31.01 L628.0 31.46 L629.0 31.86 L630.0 32.19 L631.0 32.43 L632.0 32.57 L633.0 32.60 L634.0 32.51 L635.0 32.32 L636.0 32.03 L637.0 31.66 L638.0 31.24 L639.0 30.78 L640.0 30.32 L641.0 29.88 L642.0 29.49 L643.0 29.17 L644.0 28.94 L645.0 28.82 L646.0 28.81 L647.0 28.94 L648.0 29.20 L649.0 29.58 L650.0 30.04 L651.0 30.56 L652.0 31.08 L653.0 31.57 L654.0 32.00 L655.0 32.33 L656.0 32.53 L657.0 32.60 L658.0 32.52 L659.0 32.30 L660.0 31.96 L661.0 31.53 L662.0 31.03 L663.0 30.50 L664.0 29.99 L665.0 29.54 L666.0 29.17 L667.0 28.92 L668.0 28.81 L669.0 28.83 L670.0 28.95 L671.0 29.17 L672.0 29.48 L673.0 29.85 L674.0 30.27 L675.0 30.71 L676.0 31.15 L677.0 31.57 L678.0 31.94 L679.0 32.24 L680.0 32.46 L681.0 32.58 L682.0 32.59 L683.0 32.50 L684.0 32.32 L685.0 32.04 L686.0 31.69 L687.0 31.28 L688.0 30.85 L689.0 30.40 L690.0 29.97 L691.0 29.58 L692.0 29.25 L693.0 29.01 L694.0 28.85 L695.0 28.80 L696.0 28.86 L697.0 29.02 L698.0 29.29 L699.0 29.64 L700.0 30.05 L701.0 30.50 L702.0 30.97 L703.0 31.41 L704.0 31.82 L705.0 32.16 L706.0 32.41 L707.0 32.56 L708.0 32.60 L709.0 32.53 L710.0 32.34 L711.0 32.06 L712.0 31.70 L713.0 31.28 L714.0 30.83 L715.0 30.36 L716.0 29.92 L717.0 29.53 L718.0 29.20 L719.0 28.96 L720.0 28.83 L721.0 28.80 L722.0 28.89 L723.0 29.07 L724.0 29.35 L725.0 29.70 L726.0 30.10 L727.0 30.54 L728.0 30.99 L729.0 31.42 L730.0 31.81 L731.0 32.14 L732.0 32.39 L733.0 32.55 L734.0 32.60 L735.0 32.55 L736.0 32.39 L737.0 32.14 L738.0 31.81 L739.0 31.42 L740.0 30.99 L741.0 30.54 L742.0 30.10 L743.0 29.70 L744.0 29.35 L745.0 29.07 L746.0 28.89 L747.0 28.80 L748.0 28.83 L749.0 28.96 L750.0 29.20 L751.0 29.53 L752.0 29.92 L753.0 30.36 L754.0 30.83 L755.0 31.28 L756.0 31.70 L757.0 32.06 L758.0 32.34 L759.0 32.53 L760.0 32.60 L761.0 32.56 L762.0 32.41 L763.0 32.16 L764.0 31.82 L765.0 31.41 L766.0 30.97 L767.0 30.50 L768.0 30.05 L769.0 29.64 L770.0 29.29 L771.0 29.02 L772.0 28.86 L773.0 28.80 L774.0 28.86 L775.0 29.05 L776.0 29.34 L777.0 29.73 L778.0 30.18 L779.0 30.66 L780.0 31.15 L781.0 31.61 L782.0 32.00 L783.0 32.31 L784.0 32.52 L785.0 32.60 L786.0 32.55 L787.0 32.39 L788.0 32.11 L789.0 31.73 L790.0 31.29 L791.0 30.81 L792.0 30.32 L793.0 29.86 L794.0 29.45 L795.0 29.13 L796.0 28.91 L797.0 28.81 L798.0 28.83 L799.0 28.98 L800.0 29.23 L801.0 29.59 L802.0 30.01 L803.0 30.48 L804.0 30.97 L805.0 31.43 L806.0 31.85 L807.0 32.20 L808.0 32.44 L809.0 32.58 L810.0 32.59 L811.0 32.48 L812.0 32.25 L813.0 31.93 L814.0 31.52 L815.0 31.06 L816.0 30.58 L817.0 30.10 L818.0 29.67 L819.0 29.30 L820.0 29.02 L821.0 28.85 L822.0 28.80 L823.0 28.87 L824.0 29.05 L825.0 29.32 L826.0 29.68 L827.0 30.10 L828.0 30.56 L829.0 31.02 L830.0 31.47 L831.0 31.87 L832.0 32.20 L833.0 32.44 L834.0 32.57 L835.0 32.59 L836.0 32.50 L837.0 32.31 L838.0 32.01 L839.0 31.64 L840.0 31.21 L841.0 30.75 L842.0 30.28 L843.0 29.85 L844.0 29.46 L845.0 29.15 L846.0 28.93 L847.0 28.81 L848.0 28.82 L849.0 28.95 L850.0 29.21 L851.0 29.57 L852.0 30.02 L853.0 30.51 L854.0 31.02 L855.0 31.50 L856.0 31.93 L857.0 32.27 L858.0 32.49 L859.0 32.60 L860.0 32.56 L861.0 32.40 L862.0 32.11 L863.0 31.72 L864.0 31.26 L865.0 30.76 L866.0 30.26 L867.0 29.79 L868.0 29.38 L869.0 29.07 L870.0 28.87 L871.0 28.80 L872.0 28.87 L873.0 29.06 L874.0 29.37 L875.0 29.78 L876.0 30.25 L877.0 30.75 L878.0 31.25 L879.0 31.71 L880.0 32.10 L881.0 32.39 L882.0 32.56 L883.0 32.60 L884.0 32.50 L885.0 32.28 L886.0 31.95 L887.0 31.53 L888.0 31.05 L889.0 30.55 L890.0 30.06 L891.0 29.61 L892.0 29.24 L893.0 28.97 L894.0 28.82 L895.0 28.81 L896.0 28.91 L897.0 29.12 L898.0 29.42 L899.0 29.80 L900.0 30.24 L901.0 30.70 L902.0 31.16 L903.0 31.60 L904.0 31.98 L905.0 32.28 L906.0 32.49 L907.0 32.59 L908.0 32.58 L909.0 32.46 L910.0 32.23 L911.0 31.91 L912.0 31.51 L913.0 31.07 L914.0 30.61 L915.0 30.15 L916.0 29.72 L917.0 29.36 L918.0 29.07 L919.0 28.88 L920.0 28.80 L921.0 28.84 L922.0 28.98 L923.0 29.23 L924.0 29.56 L925.0 29.96 L926.0 30.41 L927.0 30.87 L928.0 31.33 L929.0 31.74 L930.0 32.10 L931.0 32.37 L932.0 32.54 L933.0 32.60 L934.0 32.55 L935.0 32.39 L936.0 32.13 L937.0 31.78 L938.0 31.37 L939.0 30.92 L940.0 30.46 L941.0 30.01 L942.0 29.60 L943.0 29.26 L944.0 29.00 L945.0 28.85 L946.0 28.80 L947.0 28.89 L948.0 29.12 L949.0 29.47 L950.0 29.92 L951.0 30.42 L952.0 30.95 L953.0 31.46 L954.0 31.91 L955.0 32.27 L956.0 32.50 L957.0 32.60 L958.0 32.55 L959.0 32.35 L960.0 32.03 L961.0 31.60 L962.0 31.11 L963.0 30.58 L964.0 30.06 L965.0 29.59 L966.0 29.21 L967.0 28.94 L968.0 28.81 L969.0 28.83 L970.0 29.00 L971.0 29.32 L972.0 29.76 L973.0 30.27 L974.0 30.82 L975.0 31.37 L976.0 31.85 L977.0 32.24 L978.0 32.49 L979.0 32.60 L980.0 32.54 L981.0 32.33 L982.0 31.98 L983.0 31.52 L984.0 30.99 L985.0 30.44 L986.0 29.91 L987.0 29.44 L988.0 29.09 L989.0 28.87 L990.0 28.80 L991.0 28.88 L992.0 29.09 L993.0 29.41 L994.0 29.82 L995.0 30.30 L996.0 30.80 L997.0 31.30 L998.0 31.75 L999.0 32.13 L1000.0 32.41 L1001.0 32.57 L1002.0 32.59 L1003.0 32.49 L1004.0 32.25 L1005.0 31.91 L1006.0 31.49 L1007.0 31.00 L1008.0 30.50 L1009.0 30.01 L1010.0 29.57 L1011.0 29.21 L1012.0 28.95 L1013.0 28.82 L1014.0 28.82 L1015.0 28.96 L1016.0 29.24 L1017.0 29.64 L1018.0 30.11 L1019.0 30.63 L1020.0 31.16 L1021.0 31.65 L1022.0 32.07 L1023.0 32.38 L1024.0 32.56 L1025.0 32.60 L1026.0 32.49 L1027.0 32.24 L1028.0 31.87 L1029.0 31.41 L1030.0 30.90 L1031.0 30.37 L1032.0 29.87 L1033.0 29.43 L1034.0 29.09 L1035.0 28.87 L1036.0 28.80 L1037.0 28.87 L1038.0 29.09 L1039.0 29.43 L1040.0 29.87 L1041.0 30.37 L1042.0 30.90 L1043.0 31.41 L1044.0 31.87 L1045.0 32.24 L1046.0 32.49 L1047.0 32.60 L1048.0 32.56 L1049.0 32.38 L1050.0 32.07 L1051.0 31.65 L1052.0 31.16 L1053.0 30.63 L1054.0 30.11 L1055.0 29.64 L1056.0 29.24 L1057.0 28.96 L1058.0 28.82 L1059.0 28.82 L1060.0 28.94 L1061.0 29.18 L1062.0 29.52" fill="none" stroke="#2b5a97" stroke-width="1.1"/>
<circle cx="2.4" cy="21.5" r="6.6" fill="#fff" stroke="#2b5896" stroke-width="4.4"/>
<circle cx="25.5" cy="21.5" r="6.6" fill="#fff" stroke="#2b5896" stroke-width="4.4"/>
<circle cx="48.8" cy="22.0" r="6.6" fill="#fff" stroke="#2b5896" stroke-width="4.4"/>
<circle cx="71.8" cy="21.5" r="6.6" fill="#fff" stroke="#2b5896" stroke-width="4.4"/>
<circle cx="98.5" cy="21.5" r="6.6" fill="#fff" stroke="#2b5896" stroke-width="4.4"/>
<circle cx="124.0" cy="22.0" r="6.6" fill="#fff" stroke="#2b5896" stroke-width="4.4"/>
<circle cx="147.8" cy="21.5" r="6.6" fill="#fff" stroke="#2b5896" stroke-width="4.4"/>
<circle cx="172.4" cy="22.0" r="6.6" fill="#fff" stroke="#2b5896" stroke-width="4.4"/>
<circle cx="197.2" cy="21.5" r="6.6" fill="#fff" stroke="#2b5896" stroke-width="4.4"/>
<circle cx="221.4" cy="21.5" r="6.6" fill="#fff" stroke="#2b5896" stroke-width="4.4"/>
<circle cx="245.6" cy="22.0" r="6.6" fill="#fff" stroke="#2b5896" stroke-width="4.4"/>
<circle cx="269.7" cy="21.5" r="6.6" fill="#fff" stroke="#2b5896" stroke-width="4.4"/>
<circle cx="293.9" cy="22.0" r="6.6" fill="#fff" stroke="#2b5896" stroke-width="4.4"/>
<circle cx="318.5" cy="21.5" r="6.6" fill="#fff" stroke="#2b5896" stroke-width="4.4"/>
<circle cx="342.4" cy="21.5" r="6.6" fill="#fff" stroke="#2b5896" stroke-width="4.4"/>
<circle cx="367.5" cy="20.5" r="6.6" fill="#fff" stroke="#2b5896" stroke-width="4.4"/>
<circle cx="392.4" cy="21.5" r="6.6" fill="#fff" stroke="#2b5896" stroke-width="4.4"/>
<circle cx="416.5" cy="22.5" r="6.6" fill="#fff" stroke="#2b5896" stroke-width="4.4"/>
<circle cx="442.1" cy="21.5" r="6.6" fill="#fff" stroke="#2b5896" stroke-width="4.4"/>
<circle cx="466.3" cy="20.5" r="6.6" fill="#fff" stroke="#2b5896" stroke-width="4.4"/>
<circle cx="491.9" cy="21.5" r="6.6" fill="#fff" stroke="#2b5896" stroke-width="4.4"/>
<circle cx="516.1" cy="21.5" r="6.6" fill="#fff" stroke="#2b5896" stroke-width="4.4"/>
<circle cx="542.8" cy="22.0" r="6.6" fill="#fff" stroke="#2b5896" stroke-width="4.4"/>
<circle cx="570.5" cy="21.5" r="6.6" fill="#fff" stroke="#2b5896" stroke-width="4.4"/>
<circle cx="595.2" cy="21.5" r="6.6" fill="#fff" stroke="#2b5896" stroke-width="4.4"/>
<circle cx="619.9" cy="22.0" r="6.6" fill="#fff" stroke="#2b5896" stroke-width="4.4"/>
<circle cx="645.6" cy="21.5" r="6.6" fill="#fff" stroke="#2b5896" stroke-width="4.4"/>
<circle cx="668.3" cy="21.5" r="6.6" fill="#fff" stroke="#2b5896" stroke-width="4.4"/>
<circle cx="695.0" cy="21.0" r="6.6" fill="#fff" stroke="#2b5896" stroke-width="4.4"/>
<circle cx="720.7" cy="21.5" r="6.6" fill="#fff" stroke="#2b5896" stroke-width="4.4"/>
<circle cx="747.3" cy="21.5" r="6.6" fill="#fff" stroke="#2b5896" stroke-width="4.4"/>
<circle cx="773.0" cy="21.5" r="6.6" fill="#fff" stroke="#2b5896" stroke-width="4.4"/>
<circle cx="797.3" cy="21.5" r="6.6" fill="#fff" stroke="#2b5896" stroke-width="4.4"/>
<circle cx="821.9" cy="21.5" r="6.6" fill="#fff" stroke="#2b5896" stroke-width="4.4"/>
<circle cx="847.5" cy="22.0" r="6.6" fill="#fff" stroke="#2b5896" stroke-width="4.4"/>
<circle cx="871.0" cy="21.5" r="6.6" fill="#fff" stroke="#2b5896" stroke-width="4.4"/>
<circle cx="894.6" cy="21.5" r="6.6" fill="#fff" stroke="#2b5896" stroke-width="4.4"/>
<circle cx="920.2" cy="21.0" r="6.6" fill="#fff" stroke="#2b5896" stroke-width="4.4"/>
<circle cx="945.9" cy="21.5" r="6.6" fill="#fff" stroke="#2b5896" stroke-width="4.4"/>
<circle cx="968.4" cy="21.5" r="6.6" fill="#fff" stroke="#2b5896" stroke-width="4.4"/>
<circle cx="989.9" cy="21.5" r="6.6" fill="#fff" stroke="#2b5896" stroke-width="4.4"/>
<circle cx="1013.5" cy="21.5" r="6.6" fill="#fff" stroke="#2b5896" stroke-width="4.4"/>
<circle cx="1036.0" cy="21.5" r="6.6" fill="#fff" stroke="#2b5896" stroke-width="4.4"/>
<circle cx="1058.5" cy="21.5" r="6.6" fill="#fff" stroke="#2b5896" stroke-width="4.4"/>
</svg>
<div class="t" style="left:-35.0px;top:338.2px;font-size:20px;font-weight:normal;color:#1c0202;transform:scaleX(1.049);transform-origin:0 0;-webkit-text-stroke:1.1px currentColor;">Created</div>
<div class="t" style="left:47.8px;top:338.2px;font-size:20px;font-weight:normal;color:#1c0202;transform:scaleX(1.014);transform-origin:0 0;-webkit-text-stroke:1.1px currentColor;">by</div>
<div class="t" style="left:77.0px;top:338.2px;font-size:20px;font-weight:normal;color:#1c0202;transform:scaleX(0.989);transform-origin:0 0;-webkit-text-stroke:1.1px currentColor;">Rachel</div>
<div class="t" style="left:145.2px;top:338.2px;font-size:20px;font-weight:normal;color:#1c0202;transform:scaleX(1.049);transform-origin:0 0;-webkit-text-stroke:1.1px currentColor;">Lynette</div>
<div class="t" style="left:221.3px;top:338.2px;font-size:20px;font-weight:normal;color:#1c0202;transform:scaleX(1.098);transform-origin:0 0;-webkit-text-stroke:1.1px currentColor;">©2011-2020</div>
<div class="t" style="left:352.3px;top:338.2px;font-size:20px;font-weight:normal;color:#1c0202;transform:scaleX(1.025);transform-origin:0 0;-webkit-text-stroke:1.1px currentColor;">all</div>
<div class="t" style="left:379.0px;top:338.2px;font-size:20px;font-weight:normal;color:#1c0202;transform:scaleX(1.129);transform-origin:0 0;-webkit-text-stroke:1.1px currentColor;">rights</div>
<div class="t" style="left:440.4px;top:338.2px;font-size:20px;font-weight:normal;color:#1c0202;transform:scaleX(1.117);transform-origin:0 0;-webkit-text-stroke:1.1px currentColor;">reserved</div>
</div>
<div class="a" style="left:1299px;top:555px;width:7px;height:102px;background:#dadce0;border-radius:4px"></div>
<div class="a" style="left:368px;top:666px;width:833px;height:8px;background:#dadce0;border-radius:4px"></div>
<div class="a" style="left:220px;top:678px;width:1090px;height:1px;background:#e8eaed"></div>
<div class="a" style="left:756px;top:681.5px;width:2px;height:2px;background:#bdc1c6;border-radius:1px"></div>
<div class="a" style="left:764px;top:681.5px;width:2px;height:2px;background:#bdc1c6;border-radius:1px"></div>
<div class="a" style="left:772px;top:681.5px;width:2px;height:2px;background:#bdc1c6;border-radius:1px"></div>
<div class="a" style="left:220px;top:687px;width:1090px;height:1px;background:#dadce0"></div>
<div class="t" style="left:236px;top:700px;font-size:14.5px;color:#202124">None of the words i put in this box (sliding,icing,riding, and tuning)</div>
<div class="a" style="left:1256px;top:723px;width:38px;height:38px;border:1px solid #dadce0;border-radius:4px;background:#fff"></div>
<svg style="left:1265px;top:732px" width="19" height="21" viewBox="0 0 19 21"><path d="M2 0 H17 Q19 0 19 2 V16 Q19 18 17 18 H12 L9.5 21 L7 18 H2 Q0 18 0 16 V2 Q0 0 2 0 Z" fill="#5f6368"/><path d="M9.5 3 Q10.2 8.3 15.5 9 Q10.2 9.7 9.5 15 Q8.8 9.7 3.5 9 Q8.8 8.3 9.5 3 Z" fill="#fff"/></svg>
<!-- ===== SIDE PANEL ===== -->
<div class="a" style="left:1310px;top:168px;width:1px;height:600px;background:#dadce0"></div>
<svg style="left:1329px;top:187px" width="19" height="19" viewBox="0 0 19 19"><path d="M0 2 Q0 0 2 0 H14.5 V4.5 H4.5 V14.5 H0 Z" fill="#4285f4"/><path d="M14.5 0 H17 Q19 0 19 2 V4.5 H14.5 Z" fill="#1967d2"/><path d="M14.5 4.5 H19 V14.5 H14.5 Z" fill="#fbbc04"/><path d="M4.5 14.5 H14.5 V19 H2 Q0 19 0 17 V14.5 Z" fill="#34a853"/><path d="M14.5 14.5 H19 L14.5 19 Z" fill="#ea4335"/><rect x="4.5" y="4.5" width="10" height="10" fill="#fff"/><text x="9.5" y="12.6" text-anchor="middle" font-size="8" font-weight="bold" fill="#1967d2" font-family="Liberation Sans">31</text></svg>
<svg style="left:1329px;top:242px" width="19" height="20" viewBox="0 0 19 20"><rect width="19" height="20" rx="2" fill="#fbbc04"/><circle cx="9.5" cy="8.3" r="3.8" fill="#fff"/><rect x="7.7" y="12" width="3.6" height="3.2" fill="#fff"/></svg>
<svg style="left:1329px;top:298px" width="19" height="19" viewBox="0 0 19 19"><circle cx="9.5" cy="9.5" r="9.5" fill="#4285f4"/><path d="M7 13.8 L14.3 5.7" stroke="#fff" stroke-width="2.4" stroke-linecap="round"/><circle cx="5" cy="10.5" r="1.6" fill="#fbbc04"/></svg>
<svg style="left:1334px;top:735px" width="7" height="11" viewBox="0 0 7 11"><path d="M1 1 L5.5 5.5 L1 10" fill="none" stroke="#444746" stroke-width="1.8"/></svg>
</body></html>
